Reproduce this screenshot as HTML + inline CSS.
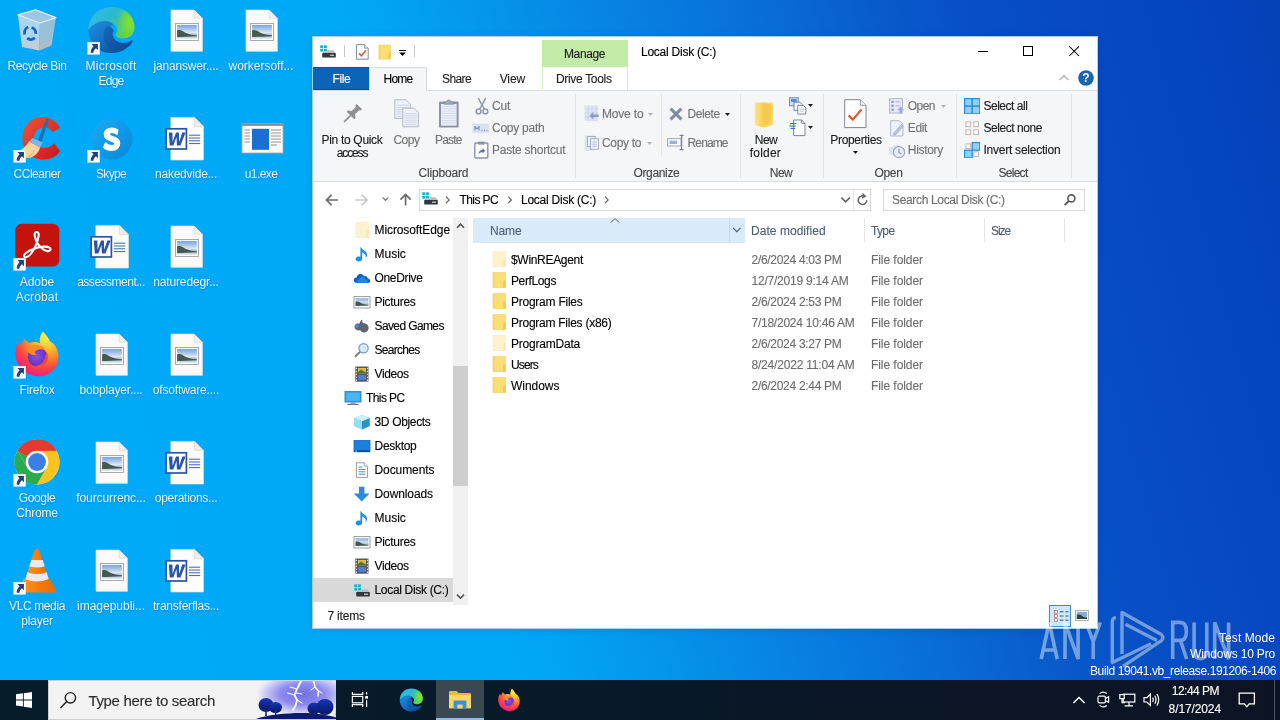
<!DOCTYPE html>
<html><head><meta charset="utf-8"><title>Local Disk (C:)</title>
<style>
html,body{margin:0;padding:0}
body{width:1280px;height:720px;overflow:hidden;position:relative;font-family:"Liberation Sans",sans-serif;background:#0a5fd0}
#root{position:absolute;left:0;top:0;width:1280px;height:720px;will-change:transform}
.r{position:absolute;display:block}
.t{position:absolute;white-space:nowrap;font-family:"Liberation Sans",sans-serif;-webkit-text-stroke:.12px currentColor}
</style></head><body><div id="root">
<div class="r" style="left:0;top:0;width:1280px;height:720px;background:linear-gradient(75deg,#00a9f9 0%,#00a8f8 36%,#029ff3 41%,#0497ee 45%,#068ce8 50%,#0880e2 55.6%,#0875dc 61%,#096ad5 66%,#095ccc 72%,#0750c6 78%,#074ac2 85%,#0545c0 93%,#0541b6 100%)"></div>
<svg class="r" style="left:13px;top:6px;overflow:visible;" width="48" height="50" viewBox="0 0 48 50"><defs><linearGradient id="rbl1" x1="0" y1="0" x2="0" y2="1"><stop offset="0" stop-color="#c3def0"/><stop offset=".7" stop-color="#cfdde8"/><stop offset="1" stop-color="#ecd2c4"/></linearGradient><linearGradient id="rbr1" x1="0" y1="0" x2="0" y2="1"><stop offset="0" stop-color="#a9c3d6"/><stop offset=".7" stop-color="#b5c3cf"/><stop offset="1" stop-color="#e2b9a8"/></linearGradient></defs><path d="M4.8 8.8 L26.9 17 L26.2 44.6 L9 41.1Z" fill="url(#rbl1)" opacity=".85"/><path d="M26.9 17 L42.9 11.600 L38.600 39.500 L26.200 44.600Z" fill="url(#rbr1)" opacity=".88"/><path d="M4.8 8.8 L22.7 3.8 L42.9 11.6 L26.9 17Z" fill="#9dc6e2" stroke="#e3f1fa" stroke-width="1.2" stroke-linejoin="round"/><g fill="none" stroke="#1763bd" stroke-width="2.900"><path d="M11.800 28.500 a5.400 5.800 0 0 1 3.400 -7.300"/><path d="M18.600 21.600 a5.400 5.800 0 0 1 4.200 6.200"/><path d="M21.800 31.800 a5.600 5.600 0 0 1 -7.600 .400"/></g></svg>
<div class="t" style="left:7.50px;top:58.00px;font-size:12px;line-height:16px;color:rgba(255,255,255,.92);letter-spacing:-0.396px;text-shadow:0 1px 2px rgba(0,35,90,.26),0 0 1px rgba(0,35,90,.12);-webkit-text-stroke:0;">Recycle Bin</div>
<svg class="r" style="left:87px;top:6px;overflow:visible;" width="48" height="50" viewBox="0 0 48 50"><defs><linearGradient id="eg12" x1="0" y1="0" x2="1" y2=".6"><stop offset="0" stop-color="#30bdf2"/><stop offset=".5" stop-color="#2bb9cf"/><stop offset="1" stop-color="#63d24c"/></linearGradient><linearGradient id="eg22" x1="0" y1="0" x2=".8" y2="1"><stop offset="0" stop-color="#1d8fdc"/><stop offset=".55" stop-color="#1670c4"/><stop offset="1" stop-color="#0c4b98"/></linearGradient><radialGradient id="eg32" cx=".8" cy=".5" r=".55"><stop offset="0" stop-color="#86e22c"/><stop offset=".6" stop-color="#6fd845" stop-opacity=".8"/><stop offset="1" stop-color="#6fd845" stop-opacity="0"/></radialGradient><linearGradient id="eg42" x1="0" y1="0" x2="1" y2="1"><stop offset="0" stop-color="#1668ba"/><stop offset="1" stop-color="#0f4790"/></linearGradient></defs><path d="M1.5 24 C1.5 10 12 1 25 1 C38 1 47.5 10 47.5 21 C47.5 28 42.5 32.5 36 32.5 C30 32.5 28.5 30 28.5 28.5 C28.5 27 30.2 26.6 30.2 24 C30.2 20.5 26.5 16.5 20.5 16.5 C11 16.500 3.500 23 1.500 24Z" fill="url(#eg12)"/><path d="M25 1 C38 1 47.5 10 47.5 21 C47.5 28 42.5 32.5 36 32.5 C31 32.5 29 31 28.6 29 L30 12Z" fill="url(#eg32)"/><path d="M1.5 24 C1.5 37 11 47 24 47 C30 47 35 45.5 39 42.5 C30 44 20 39 20 29 C20 23 23 19.500 26.500 18.500 C22 13 9 13.500 1.500 24Z" fill="url(#eg22)"/><path d="M19.500 21 C15.500 25 15.500 33 19 38.500 C23 44.500 31 46.500 38 43 C42 41 44.500 38 45.500 35.500 C46 34.400 45 34 44.200 34.600 C40 37.600 33 38 28.500 34 C25 31 25 27 27 25 C25.500 22 22.500 19.500 19.500 21Z" fill="url(#eg42)"/><g transform="translate(.6 36.2)"><rect x="0" y="0" width="12.1" height="12.1" fill="#fff" stroke="#d3e6f3" stroke-width=".5"/><path d="M3.8 1.7 H10.3 V8 L8.3 6 C6.8 7.2 5.8 8.9 5.6 10.9 L3 10.4 C3.1 7.6 4.3 5.4 6 4Z" fill="#1d3f86"/></g></svg>
<div class="t" style="left:85.50px;top:58.00px;font-size:12px;line-height:16px;color:rgba(255,255,255,.92);letter-spacing:0.258px;text-shadow:0 1px 2px rgba(0,35,90,.26),0 0 1px rgba(0,35,90,.12);-webkit-text-stroke:0;">Microsoft</div>
<div class="t" style="left:98.50px;top:73.00px;font-size:12px;line-height:16px;color:rgba(255,255,255,.92);letter-spacing:-0.756px;text-shadow:0 1px 2px rgba(0,35,90,.26),0 0 1px rgba(0,35,90,.12);-webkit-text-stroke:0;">Edge</div>
<svg class="r" style="left:162px;top:6px;overflow:visible;" width="48" height="50" viewBox="0 0 48 50"><path d="M9 4.1 H32.2 L40.4 12.3 V45.3 H9Z" fill="#fbfaf9" stroke="#e9e3dc" stroke-width=".7"/><path d="M32.2 4.1 V12.3 H40.4Z" fill="#f4efe9" stroke="#dcd3c9" stroke-width=".6"/><rect x="13.6" y="17.4" width="22.8" height="17" fill="#fff" stroke="#8b969e" stroke-width=".8"/><defs><linearGradient id="sky3" x1="0" y1="0" x2="0" y2="1"><stop offset="0" stop-color="#7aa3dc"/><stop offset=".3" stop-color="#a9c6ea"/><stop offset=".55" stop-color="#dce8f3"/><stop offset=".75" stop-color="#9db6c8"/><stop offset="1" stop-color="#e3ebf1"/></linearGradient></defs><rect x="15.1" y="18.9" width="19.800" height="14" fill="url(#sky3)"/><path d="M15.100 24.400 C17 23.600 19.500 24.200 22 26 C26 28.600 31 28.800 34.900 29.200 L34.900 30.200 C28 30.600 20 30.800 15.100 31Z" fill="#46594f"/></svg>
<div class="t" style="left:153.50px;top:58.00px;font-size:12px;line-height:16px;color:rgba(255,255,255,.92);letter-spacing:-0.182px;text-shadow:0 1px 2px rgba(0,35,90,.26),0 0 1px rgba(0,35,90,.12);-webkit-text-stroke:0;">jananswer....</div>
<svg class="r" style="left:237px;top:6px;overflow:visible;" width="48" height="50" viewBox="0 0 48 50"><path d="M9 4.1 H32.2 L40.4 12.3 V45.3 H9Z" fill="#fbfaf9" stroke="#e9e3dc" stroke-width=".7"/><path d="M32.2 4.1 V12.3 H40.4Z" fill="#f4efe9" stroke="#dcd3c9" stroke-width=".6"/><rect x="13.6" y="17.4" width="22.8" height="17" fill="#fff" stroke="#8b969e" stroke-width=".8"/><defs><linearGradient id="sky4" x1="0" y1="0" x2="0" y2="1"><stop offset="0" stop-color="#7aa3dc"/><stop offset=".3" stop-color="#a9c6ea"/><stop offset=".55" stop-color="#dce8f3"/><stop offset=".75" stop-color="#9db6c8"/><stop offset="1" stop-color="#e3ebf1"/></linearGradient></defs><rect x="15.1" y="18.9" width="19.800" height="14" fill="url(#sky4)"/><path d="M15.100 24.400 C17 23.600 19.500 24.200 22 26 C26 28.600 31 28.800 34.900 29.200 L34.900 30.200 C28 30.600 20 30.800 15.100 31Z" fill="#46594f"/></svg>
<div class="t" style="left:228.50px;top:58.00px;font-size:12px;line-height:16px;color:rgba(255,255,255,.92);letter-spacing:-0.010px;text-shadow:0 1px 2px rgba(0,35,90,.26),0 0 1px rgba(0,35,90,.12);-webkit-text-stroke:0;">workersoff...</div>
<svg class="r" style="left:13px;top:114px;overflow:visible;" width="48" height="50" viewBox="0 0 48 50"><defs><linearGradient id="ccg5" x1="0" y1="0" x2="1" y2="1"><stop offset="0" stop-color="#f0553a"/><stop offset="1" stop-color="#c8161a"/></linearGradient></defs><path d="M47 14 C43 5.5 35 2.5 28 3 C17 4 10 12 9.5 23 C9 36 18 45.5 30 45.5 C38 45.5 44 42 47 37 L41 29 C38.5 32.5 35 34 31 34 C25 34 21 29.5 21 24 C21 18 25.5 13.5 31 13.5 C35 13.5 37.5 15 39.5 18Z" fill="url(#ccg5)"/><path d="M33.5 4.5 L36 5.5 L27.5 31 L23.5 29.5Z" fill="#1d6fb8"/><path d="M19.5 24 L30 28.5 L27 33.5 L16 27.5Z" fill="#7ab7e3"/><path d="M16 27.5 L27 33.5 C26 38 22 43 15.5 44 C10 44.5 4 41 2 38.5 C8 37 13 32.5 16 27.5Z" fill="#f6d59a"/><path d="M21.5 36 C19.5 40 17 42.5 13.5 44" stroke="#e3b56a" stroke-width="1" fill="none"/><g transform="translate(.6 36.2)"><rect x="0" y="0" width="12.1" height="12.1" fill="#fff" stroke="#d3e6f3" stroke-width=".5"/><path d="M3.8 1.7 H10.3 V8 L8.3 6 C6.8 7.2 5.8 8.9 5.6 10.9 L3 10.4 C3.1 7.6 4.3 5.4 6 4Z" fill="#1d3f86"/></g></svg>
<div class="t" style="left:13.50px;top:166.00px;font-size:12px;line-height:16px;color:rgba(255,255,255,.92);letter-spacing:-0.461px;text-shadow:0 1px 2px rgba(0,35,90,.26),0 0 1px rgba(0,35,90,.12);-webkit-text-stroke:0;">CCleaner</div>
<svg class="r" style="left:87px;top:114px;overflow:visible;" width="48" height="50" viewBox="0 0 48 50"><defs><linearGradient id="skg6" x1="0" y1="0" x2="1" y2="1"><stop offset="0" stop-color="#1cabf3"/><stop offset=".5" stop-color="#0f9ae9"/><stop offset="1" stop-color="#0a86d6"/></linearGradient></defs><circle cx="25" cy="25" r="20.5" fill="url(#skg6)"/><g transform="translate(24.600 25.200) scale(1.06 1.16) translate(-24.400 -24.450)"><path d="M30.2 16.6 C28.6 15.4 26.6 14.9 24.6 14.9 C20.4 14.9 17.6 17.1 17.6 20.4 C17.6 23.6 20 24.9 23.6 25.8 C26.4 26.5 27.400 27 27.400 28.200 C27.400 29.400 26.200 30.100 24.500 30.100 C22.300 30.100 20.300 29.200 18.600 27.800 L16.800 31.600 C18.800 33.200 21.600 34 24.400 34 C28.900 34 32 31.700 32 28 C32 24.700 29.600 23.400 26 22.500 C23.200 21.800 22.200 21.300 22.200 20.200 C22.200 19.200 23.200 18.600 24.800 18.600 C26.400 18.600 28 19.200 29.500 20.200Z" fill="#fff" stroke="#fff" stroke-width="1.2"/></g><g transform="translate(.6 36.2)"><rect x="0" y="0" width="12.1" height="12.1" fill="#fff" stroke="#d3e6f3" stroke-width=".5"/><path d="M3.8 1.7 H10.3 V8 L8.3 6 C6.8 7.2 5.8 8.9 5.6 10.9 L3 10.4 C3.1 7.6 4.3 5.4 6 4Z" fill="#1d3f86"/></g></svg>
<div class="t" style="left:96.00px;top:166.00px;font-size:12px;line-height:16px;color:rgba(255,255,255,.92);letter-spacing:-0.670px;text-shadow:0 1px 2px rgba(0,35,90,.26),0 0 1px rgba(0,35,90,.12);-webkit-text-stroke:0;">Skype</div>
<svg class="r" style="left:162px;top:114px;overflow:visible;" width="48" height="50" viewBox="0 0 48 50"><path d="M8.8 3.4 H32.5 L41.5 12.4 V46 H8.8Z" fill="#fdfdfd" stroke="#e4ddd3" stroke-width=".7"/><path d="M32.5 3.4 V12.4 H41.5Z" fill="#f1ece4" stroke="#d6cfc5" stroke-width=".6"/><g stroke="#3f62a8" stroke-width="1"><path d="M27 21.2 H38.2"/><path d="M27 24 H38.2"/><path d="M27 26.8 H38.2"/><path d="M27 29.6 H38.2"/></g><rect x="4.1" y="14.8" width="20.3" height="20.2" fill="#fff" stroke="#2a55a5" stroke-width="1.7"/><path d="M6.8 18.6 H10.4 L10.6 28 L14 18.6 H16.9 L17.2 28 L20.3 18.6 H23.6 L18.4 31.4 H14.9 L14.5 23 L11.3 31.4 H7.8Z" fill="#2a55a5"/></svg>
<div class="t" style="left:155.00px;top:166.00px;font-size:12px;line-height:16px;color:rgba(255,255,255,.92);letter-spacing:-0.226px;text-shadow:0 1px 2px rgba(0,35,90,.26),0 0 1px rgba(0,35,90,.12);-webkit-text-stroke:0;">nakedvide...</div>
<svg class="r" style="left:237px;top:114px;overflow:visible;" width="48" height="50" viewBox="0 0 48 50"><rect x="5" y="9.5" width="41" height="29.5" fill="#fcfbfa" stroke="#a7a7a7" stroke-width=".8"/><rect x="5" y="9.5" width="41" height="2.4" fill="#8d8d8d"/><rect x="15" y="14.8" width="17" height="21" fill="#1a6fd0"/><g stroke="#8b8580" stroke-width=".9"><path d="M7.5 16 H12.8"/><path d="M7.5 19 H12.8"/><path d="M7.5 22 H12.8"/><path d="M7.5 25 H12.8"/><path d="M7.5 28 H12.8"/><path d="M34 16 H44"/><path d="M34 19 H44"/><path d="M34 22 H44"/><path d="M34 25 H44"/><path d="M34 28 H44"/><path d="M34 31 H40"/></g></svg>
<div class="t" style="left:244.75px;top:166.00px;font-size:12px;line-height:16px;color:rgba(255,255,255,.92);letter-spacing:-0.588px;text-shadow:0 1px 2px rgba(0,35,90,.26),0 0 1px rgba(0,35,90,.12);-webkit-text-stroke:0;">u1.exe</div>
<svg class="r" style="left:13px;top:222px;overflow:visible;" width="48" height="50" viewBox="0 0 48 50"><rect x="2.3" y="1.8" width="44" height="42.6" rx="6.5" fill="#c4130d"/><path d="M22.8 10.2 C24.6 9.4 26 11 25.7 13.6 C25.2 18 23.5 22.8 21 27.2 C18.6 31.4 15.6 34.6 13.2 35.2 C10.6 35.8 10.2 33.2 12.6 31.2 C16.6 27.8 24.6 24.8 31.4 24.6 C36 24.5 38.2 26.2 37.2 28 C36.2 29.8 33 29.4 30.2 27.4 C26 24.4 22.6 18.6 21.8 14 C21.4 11.8 21.8 10.6 22.8 10.2Z" fill="none" stroke="#fff" stroke-width="2.1" stroke-linejoin="round"/><g transform="translate(.6 36.2)"><rect x="0" y="0" width="12.1" height="12.1" fill="#fff" stroke="#d3e6f3" stroke-width=".5"/><path d="M3.8 1.7 H10.3 V8 L8.3 6 C6.8 7.2 5.8 8.9 5.6 10.9 L3 10.4 C3.1 7.6 4.3 5.4 6 4Z" fill="#1d3f86"/></g></svg>
<div class="t" style="left:19.75px;top:274.00px;font-size:12px;line-height:16px;color:rgba(255,255,255,.92);letter-spacing:-0.040px;text-shadow:0 1px 2px rgba(0,35,90,.26),0 0 1px rgba(0,35,90,.12);-webkit-text-stroke:0;">Adobe</div>
<div class="t" style="left:15.85px;top:289.00px;font-size:12px;line-height:16px;color:rgba(255,255,255,.92);letter-spacing:0.135px;text-shadow:0 1px 2px rgba(0,35,90,.26),0 0 1px rgba(0,35,90,.12);-webkit-text-stroke:0;">Acrobat</div>
<svg class="r" style="left:87px;top:222px;overflow:visible;" width="48" height="50" viewBox="0 0 48 50"><path d="M8.8 3.4 H32.5 L41.5 12.4 V46 H8.8Z" fill="#fdfdfd" stroke="#e4ddd3" stroke-width=".7"/><path d="M32.5 3.4 V12.4 H41.5Z" fill="#f1ece4" stroke="#d6cfc5" stroke-width=".6"/><g stroke="#3f62a8" stroke-width="1"><path d="M27 21.2 H38.2"/><path d="M27 24 H38.2"/><path d="M27 26.8 H38.2"/><path d="M27 29.6 H38.2"/></g><rect x="4.1" y="14.8" width="20.3" height="20.2" fill="#fff" stroke="#2a55a5" stroke-width="1.7"/><path d="M6.8 18.6 H10.4 L10.6 28 L14 18.6 H16.9 L17.2 28 L20.3 18.6 H23.6 L18.4 31.4 H14.9 L14.5 23 L11.3 31.4 H7.8Z" fill="#2a55a5"/></svg>
<div class="t" style="left:77.20px;top:274.00px;font-size:12px;line-height:16px;color:rgba(255,255,255,.92);letter-spacing:-0.494px;text-shadow:0 1px 2px rgba(0,35,90,.26),0 0 1px rgba(0,35,90,.12);-webkit-text-stroke:0;">assessment...</div>
<svg class="r" style="left:162px;top:222px;overflow:visible;" width="48" height="50" viewBox="0 0 48 50"><path d="M9 4.1 H32.2 L40.4 12.3 V45.3 H9Z" fill="#fbfaf9" stroke="#e9e3dc" stroke-width=".7"/><path d="M32.2 4.1 V12.3 H40.4Z" fill="#f4efe9" stroke="#dcd3c9" stroke-width=".6"/><rect x="13.6" y="17.4" width="22.8" height="17" fill="#fff" stroke="#8b969e" stroke-width=".8"/><defs><linearGradient id="sky11" x1="0" y1="0" x2="0" y2="1"><stop offset="0" stop-color="#7aa3dc"/><stop offset=".3" stop-color="#a9c6ea"/><stop offset=".55" stop-color="#dce8f3"/><stop offset=".75" stop-color="#9db6c8"/><stop offset="1" stop-color="#e3ebf1"/></linearGradient></defs><rect x="15.1" y="18.9" width="19.800" height="14" fill="url(#sky11)"/><path d="M15.100 24.400 C17 23.600 19.500 24.200 22 26 C26 28.600 31 28.800 34.900 29.200 L34.900 30.200 C28 30.600 20 30.800 15.100 31Z" fill="#46594f"/></svg>
<div class="t" style="left:153.20px;top:274.00px;font-size:12px;line-height:16px;color:rgba(255,255,255,.92);letter-spacing:-0.137px;text-shadow:0 1px 2px rgba(0,35,90,.26),0 0 1px rgba(0,35,90,.12);-webkit-text-stroke:0;">naturedegr...</div>
<svg class="r" style="left:13px;top:330px;overflow:visible;" width="48" height="50" viewBox="0 0 48 50"><defs><radialGradient id="ffg12" cx=".72" cy=".12" r="1"><stop offset="0" stop-color="#fff44f"/><stop offset=".28" stop-color="#ffbd2e"/><stop offset=".52" stop-color="#ff7a2a"/><stop offset=".72" stop-color="#ff3d4a"/><stop offset=".9" stop-color="#f0207a"/><stop offset="1" stop-color="#d81b90"/></radialGradient><radialGradient id="ffp12" cx=".45" cy=".45" r=".6"><stop offset="0" stop-color="#8a4ff0"/><stop offset="1" stop-color="#5b2bbd"/></radialGradient></defs><path d="M30 1.5 C33.5 5 36 9 37.5 12 C40 12.5 42.5 15.5 44 19 C46.5 25 46 33 41.5 38.5 C37 44.5 29.5 47 22.5 46 C12 44.5 3.5 36 2.5 26 C2 20 3.5 15 6 11.5 C6.5 13 7.5 14.5 8.5 15.5 C9 12.5 10.5 10 12 8.5 C13 10.5 14.5 12 16.5 13 C20 11.5 24.5 12 27 13.5 C26 9 27.5 4 30 1.5Z" fill="url(#ffg12)"/><circle cx="24.5" cy="27" r="9.8" fill="url(#ffp12)"/><path d="M14 19 C17 15.5 23 14 28 16 C31 17.2 33 19.5 33.5 21.5 C31 19 27 18.6 24 20 C21 21.4 21.5 24 24 24.5 C20 26 15 24 14 19Z" fill="#ff8a2a"/><path d="M33.5 21.5 C36.5 26 35.5 33 30.5 36.5 C25 40 17.5 38.5 14.5 34 C19 37 26 36.5 29.5 32.5 C32.5 29 32.5 24.5 33.5 21.5Z" fill="#ff4b3d" opacity=".85"/><g transform="translate(.6 36.2)"><rect x="0" y="0" width="12.1" height="12.1" fill="#fff" stroke="#d3e6f3" stroke-width=".5"/><path d="M3.8 1.7 H10.3 V8 L8.3 6 C6.8 7.2 5.8 8.9 5.6 10.9 L3 10.4 C3.1 7.6 4.3 5.4 6 4Z" fill="#1d3f86"/></g></svg>
<div class="t" style="left:19.50px;top:382.00px;font-size:12px;line-height:16px;color:rgba(255,255,255,.92);letter-spacing:-0.239px;text-shadow:0 1px 2px rgba(0,35,90,.26),0 0 1px rgba(0,35,90,.12);-webkit-text-stroke:0;">Firefox</div>
<svg class="r" style="left:87px;top:330px;overflow:visible;" width="48" height="50" viewBox="0 0 48 50"><path d="M9 4.1 H32.2 L40.4 12.3 V45.3 H9Z" fill="#fbfaf9" stroke="#e9e3dc" stroke-width=".7"/><path d="M32.2 4.1 V12.3 H40.4Z" fill="#f4efe9" stroke="#dcd3c9" stroke-width=".6"/><rect x="13.6" y="17.4" width="22.8" height="17" fill="#fff" stroke="#8b969e" stroke-width=".8"/><defs><linearGradient id="sky13" x1="0" y1="0" x2="0" y2="1"><stop offset="0" stop-color="#7aa3dc"/><stop offset=".3" stop-color="#a9c6ea"/><stop offset=".55" stop-color="#dce8f3"/><stop offset=".75" stop-color="#9db6c8"/><stop offset="1" stop-color="#e3ebf1"/></linearGradient></defs><rect x="15.1" y="18.9" width="19.800" height="14" fill="url(#sky13)"/><path d="M15.100 24.400 C17 23.600 19.500 24.200 22 26 C26 28.600 31 28.800 34.900 29.200 L34.900 30.200 C28 30.600 20 30.800 15.100 31Z" fill="#46594f"/></svg>
<div class="t" style="left:79.50px;top:382.00px;font-size:12px;line-height:16px;color:rgba(255,255,255,.92);letter-spacing:-0.183px;text-shadow:0 1px 2px rgba(0,35,90,.26),0 0 1px rgba(0,35,90,.12);-webkit-text-stroke:0;">bobplayer....</div>
<svg class="r" style="left:162px;top:330px;overflow:visible;" width="48" height="50" viewBox="0 0 48 50"><path d="M9 4.1 H32.2 L40.4 12.3 V45.3 H9Z" fill="#fbfaf9" stroke="#e9e3dc" stroke-width=".7"/><path d="M32.2 4.1 V12.3 H40.4Z" fill="#f4efe9" stroke="#dcd3c9" stroke-width=".6"/><rect x="13.6" y="17.4" width="22.8" height="17" fill="#fff" stroke="#8b969e" stroke-width=".8"/><defs><linearGradient id="sky14" x1="0" y1="0" x2="0" y2="1"><stop offset="0" stop-color="#7aa3dc"/><stop offset=".3" stop-color="#a9c6ea"/><stop offset=".55" stop-color="#dce8f3"/><stop offset=".75" stop-color="#9db6c8"/><stop offset="1" stop-color="#e3ebf1"/></linearGradient></defs><rect x="15.1" y="18.9" width="19.800" height="14" fill="url(#sky14)"/><path d="M15.100 24.400 C17 23.600 19.500 24.200 22 26 C26 28.600 31 28.800 34.900 29.200 L34.900 30.200 C28 30.600 20 30.800 15.100 31Z" fill="#46594f"/></svg>
<div class="t" style="left:152.80px;top:382.00px;font-size:12px;line-height:16px;color:rgba(255,255,255,.92);letter-spacing:-0.164px;text-shadow:0 1px 2px rgba(0,35,90,.26),0 0 1px rgba(0,35,90,.12);-webkit-text-stroke:0;">ofsoftware....</div>
<svg class="r" style="left:13px;top:438px;overflow:visible;" width="48" height="50" viewBox="0 0 48 50"><circle cx="24" cy="24" r="22.5" fill="#fff"/><path d="M24 24 L4.51 12.75 A22.5 22.5 0 0 1 43.49 12.75Z" fill="#e33b2e"/><path d="M24 1.5 A22.5 22.5 0 0 1 43.49 12.75 L24 12.75Z" fill="#e33b2e"/><path d="M43.49 12.75 A22.5 22.5 0 0 1 24 46.5 L33.74 29.6 L24 12.75Z" fill="#fcc31e"/><path d="M24 46.5 A22.5 22.5 0 0 1 4.51 12.75 L14.26 29.6 L33.74 29.6Z" fill="#2da94f"/><path d="M4.51 12.75 L14.26 29.6 L24 24Z" fill="#2da94f"/><path d="M24 12.75 H43.49 L33.74 29.6Z" fill="#fcc31e"/><path d="M4.51 12.75 A22.5 22.5 0 0 1 43.49 12.75 L24 12.75 L14.26 18.4Z" fill="#e33b2e"/><circle cx="24" cy="24" r="11.3" fill="#fff"/><circle cx="24" cy="24" r="8.9" fill="#3b7de9"/><g transform="translate(.6 36.2)"><rect x="0" y="0" width="12.1" height="12.1" fill="#fff" stroke="#d3e6f3" stroke-width=".5"/><path d="M3.8 1.7 H10.3 V8 L8.3 6 C6.8 7.2 5.8 8.9 5.6 10.9 L3 10.4 C3.1 7.6 4.3 5.4 6 4Z" fill="#1d3f86"/></g></svg>
<div class="t" style="left:18.70px;top:490.00px;font-size:12px;line-height:16px;color:rgba(255,255,255,.92);letter-spacing:-0.349px;text-shadow:0 1px 2px rgba(0,35,90,.26),0 0 1px rgba(0,35,90,.12);-webkit-text-stroke:0;">Google</div>
<div class="t" style="left:16.25px;top:505.00px;font-size:12px;line-height:16px;color:rgba(255,255,255,.92);letter-spacing:-0.197px;text-shadow:0 1px 2px rgba(0,35,90,.26),0 0 1px rgba(0,35,90,.12);-webkit-text-stroke:0;">Chrome</div>
<svg class="r" style="left:87px;top:438px;overflow:visible;" width="48" height="50" viewBox="0 0 48 50"><path d="M9 4.1 H32.2 L40.4 12.3 V45.3 H9Z" fill="#fbfaf9" stroke="#e9e3dc" stroke-width=".7"/><path d="M32.2 4.1 V12.3 H40.4Z" fill="#f4efe9" stroke="#dcd3c9" stroke-width=".6"/><rect x="13.6" y="17.4" width="22.8" height="17" fill="#fff" stroke="#8b969e" stroke-width=".8"/><defs><linearGradient id="sky16" x1="0" y1="0" x2="0" y2="1"><stop offset="0" stop-color="#7aa3dc"/><stop offset=".3" stop-color="#a9c6ea"/><stop offset=".55" stop-color="#dce8f3"/><stop offset=".75" stop-color="#9db6c8"/><stop offset="1" stop-color="#e3ebf1"/></linearGradient></defs><rect x="15.1" y="18.9" width="19.800" height="14" fill="url(#sky16)"/><path d="M15.100 24.400 C17 23.600 19.500 24.200 22 26 C26 28.600 31 28.800 34.900 29.200 L34.900 30.200 C28 30.600 20 30.800 15.100 31Z" fill="#46594f"/></svg>
<div class="t" style="left:76.25px;top:490.00px;font-size:12px;line-height:16px;color:rgba(255,255,255,.92);letter-spacing:-0.085px;text-shadow:0 1px 2px rgba(0,35,90,.26),0 0 1px rgba(0,35,90,.12);-webkit-text-stroke:0;">fourcurrenc...</div>
<svg class="r" style="left:162px;top:438px;overflow:visible;" width="48" height="50" viewBox="0 0 48 50"><path d="M8.8 3.4 H32.5 L41.5 12.4 V46 H8.8Z" fill="#fdfdfd" stroke="#e4ddd3" stroke-width=".7"/><path d="M32.5 3.4 V12.4 H41.5Z" fill="#f1ece4" stroke="#d6cfc5" stroke-width=".6"/><g stroke="#3f62a8" stroke-width="1"><path d="M27 21.2 H38.2"/><path d="M27 24 H38.2"/><path d="M27 26.8 H38.2"/><path d="M27 29.6 H38.2"/></g><rect x="4.1" y="14.8" width="20.3" height="20.2" fill="#fff" stroke="#2a55a5" stroke-width="1.7"/><path d="M6.8 18.6 H10.4 L10.6 28 L14 18.6 H16.9 L17.2 28 L20.3 18.6 H23.6 L18.4 31.4 H14.9 L14.5 23 L11.3 31.4 H7.8Z" fill="#2a55a5"/></svg>
<div class="t" style="left:154.75px;top:490.00px;font-size:12px;line-height:16px;color:rgba(255,255,255,.92);letter-spacing:-0.272px;text-shadow:0 1px 2px rgba(0,35,90,.26),0 0 1px rgba(0,35,90,.12);-webkit-text-stroke:0;">operations...</div>
<svg class="r" style="left:13px;top:546px;overflow:visible;" width="48" height="50" viewBox="0 0 48 50"><defs><linearGradient id="vlg18" x1="0" y1="0" x2="1" y2="0"><stop offset="0" stop-color="#f79a2e"/><stop offset=".5" stop-color="#f57e0f"/><stop offset="1" stop-color="#e96a06"/></linearGradient></defs><path d="M10.5 33 L37 33 L43.5 45 Q44 46.6 42 46.6 L5.5 46.6 Q3.6 46.6 4.3 45Z" fill="url(#vlg18)"/><path d="M21.5 4.5 Q24 1 26.3 4.5 L36.5 35.5 Q24 41.5 11.5 35.5Z" fill="url(#vlg18)"/><path d="M18.3 14 L29.7 14 L31.7 20.2 Q24 23 16.3 20.2Z" fill="#ebe9ee"/><path d="M14.4 26.2 Q24 30 33.6 26.2 L35.7 33 Q24 38 12.3 33Z" fill="#ebe9ee"/><g transform="translate(.6 36.2)"><rect x="0" y="0" width="12.1" height="12.1" fill="#fff" stroke="#d3e6f3" stroke-width=".5"/><path d="M3.8 1.7 H10.3 V8 L8.3 6 C6.8 7.2 5.8 8.9 5.6 10.9 L3 10.4 C3.1 7.6 4.3 5.4 6 4Z" fill="#1d3f86"/></g></svg>
<div class="t" style="left:9.00px;top:598.00px;font-size:12px;line-height:16px;color:rgba(255,255,255,.92);letter-spacing:-0.373px;text-shadow:0 1px 2px rgba(0,35,90,.26),0 0 1px rgba(0,35,90,.12);-webkit-text-stroke:0;">VLC media</div>
<div class="t" style="left:21.25px;top:613.00px;font-size:12px;line-height:16px;color:rgba(255,255,255,.92);letter-spacing:-0.197px;text-shadow:0 1px 2px rgba(0,35,90,.26),0 0 1px rgba(0,35,90,.12);-webkit-text-stroke:0;">player</div>
<svg class="r" style="left:87px;top:546px;overflow:visible;" width="48" height="50" viewBox="0 0 48 50"><path d="M9 4.1 H32.2 L40.4 12.3 V45.3 H9Z" fill="#fbfaf9" stroke="#e9e3dc" stroke-width=".7"/><path d="M32.2 4.1 V12.3 H40.4Z" fill="#f4efe9" stroke="#dcd3c9" stroke-width=".6"/><rect x="13.6" y="17.4" width="22.8" height="17" fill="#fff" stroke="#8b969e" stroke-width=".8"/><defs><linearGradient id="sky19" x1="0" y1="0" x2="0" y2="1"><stop offset="0" stop-color="#7aa3dc"/><stop offset=".3" stop-color="#a9c6ea"/><stop offset=".55" stop-color="#dce8f3"/><stop offset=".75" stop-color="#9db6c8"/><stop offset="1" stop-color="#e3ebf1"/></linearGradient></defs><rect x="15.1" y="18.9" width="19.800" height="14" fill="url(#sky19)"/><path d="M15.100 24.400 C17 23.600 19.500 24.200 22 26 C26 28.600 31 28.800 34.900 29.200 L34.900 30.200 C28 30.600 20 30.800 15.100 31Z" fill="#46594f"/></svg>
<div class="t" style="left:77.00px;top:598.00px;font-size:12px;line-height:16px;color:rgba(255,255,255,.92);letter-spacing:-0.003px;text-shadow:0 1px 2px rgba(0,35,90,.26),0 0 1px rgba(0,35,90,.12);-webkit-text-stroke:0;">imagepubli...</div>
<svg class="r" style="left:162px;top:546px;overflow:visible;" width="48" height="50" viewBox="0 0 48 50"><path d="M8.8 3.4 H32.5 L41.5 12.4 V46 H8.8Z" fill="#fdfdfd" stroke="#e4ddd3" stroke-width=".7"/><path d="M32.5 3.4 V12.4 H41.5Z" fill="#f1ece4" stroke="#d6cfc5" stroke-width=".6"/><g stroke="#3f62a8" stroke-width="1"><path d="M27 21.2 H38.2"/><path d="M27 24 H38.2"/><path d="M27 26.8 H38.2"/><path d="M27 29.6 H38.2"/></g><rect x="4.1" y="14.8" width="20.3" height="20.2" fill="#fff" stroke="#2a55a5" stroke-width="1.7"/><path d="M6.8 18.6 H10.4 L10.6 28 L14 18.6 H16.9 L17.2 28 L20.3 18.6 H23.6 L18.4 31.4 H14.9 L14.5 23 L11.3 31.4 H7.8Z" fill="#2a55a5"/></svg>
<div class="t" style="left:153.00px;top:598.00px;font-size:12px;line-height:16px;color:rgba(255,255,255,.92);letter-spacing:-0.224px;text-shadow:0 1px 2px rgba(0,35,90,.26),0 0 1px rgba(0,35,90,.12);-webkit-text-stroke:0;">transferflas...</div>
<div class="r" style="left:312px;top:36px;width:786px;height:593px;background:#fff;box-shadow:0 0 0 1px rgba(60,150,220,.45) inset,0 1px 7px rgba(0,0,0,.12)"></div>
<svg class="r" style="left:320px;top:45px;" width="16" height="13" viewBox="0 0 16 13"><g fill="#1fb3c9"><rect x="0.2" y="0.3" width="3" height="2.8"/><rect x="3.9" y="0.3" width="3" height="2.8"/><rect x="0.2" y="3.8" width="3" height="2.8"/><rect x="3.9" y="3.8" width="3" height="2.8"/></g><path d="M7.4 5.2 H13.4 L15.6 8 H2.4 L4 6.6 H7.4Z" fill="#b9bcc0"/><rect x="2.2" y="8" width="13.6" height="4.4" rx=".6" fill="#33363a"/><rect x="10" y="9.6" width="4" height="1.2" fill="#d8dadc"/></svg>
<div class="r" style="left:344px;top:45px;width:1px;height:12px;background:#c8c8c8;"></div>
<svg class="r" style="left:356px;top:44px;" width="13" height="16" viewBox="0 0 13 16"><path d="M.6 .6 H8.6 L12.2 4.2 V15.2 H.6Z" fill="#fff" stroke="#7b8794" stroke-width="1"/><path d="M8.6 .6 V4.2 H12.2" fill="#e9edf1" stroke="#7b8794" stroke-width=".8"/><path d="M3 9.4 L5.4 11.8 L10 6.2" fill="none" stroke="#d9603d" stroke-width="1.6"/></svg>
<svg class="r" style="left:378px;top:44px;" width="13" height="16" viewBox="0 0 14 16"><rect x="1" y=".5" width="12.6" height="15.2" rx=".5" fill="#fbde74" stroke="#f0cf5c" stroke-width=".6"/><rect x="1" y=".5" width="1.6" height="15.2" fill="#f5d465"/><path d="M11.2 9.4 L13.6 7.4 V15.7 H11.2Z" fill="#efc94e"/></svg>
<svg class="r" style="left:398px;top:48px;" width="10" height="9" viewBox="0 0 10 9"><path d="M1 2.5 H8" stroke="#000" stroke-width="1"/><path d="M1.2 4.6 H7.8 L4.5 8Z" fill="#000"/></svg>
<div class="r" style="left:414px;top:45px;width:1px;height:12px;background:#c8c8c8;"></div>
<div class="r" style="left:542px;top:40px;width:86px;height:27px;background:#c3eaa6;"></div>
<div class="r" style="left:542px;top:67px;width:86px;height:24px;background:#fff;border-left:1px solid #d5efc3;border-right:1px solid #d5efc3;box-sizing:border-box"></div>
<div class="t" style="left:564.00px;top:46.00px;font-size:12px;line-height:16px;color:#1e1e1e;letter-spacing:-0.394px;">Manage</div>
<div class="t" style="left:641.00px;top:43.50px;font-size:12px;line-height:16px;color:#000;letter-spacing:-0.245px;">Local Disk (C:)</div>
<svg class="r" style="left:959px;top:37px;" width="138" height="30" viewBox="0 0 138 30"><path d="M19 14.5 H29" stroke="#000" stroke-width="1"/><rect x="64.5" y="9.5" width="9" height="9" fill="none" stroke="#000" stroke-width="1"/><path d="M110.3 9.3 L120 19 M120 9.3 L110.3 19" stroke="#000" stroke-width="1.05"/></svg>
<div class="r" style="left:313px;top:67px;width:56px;height:23px;background:#0b64b5;box-shadow:0 1px 0 #0a548f inset,0 -1px 0 #0a548f inset"></div>
<div class="t" style="left:332.60px;top:71.00px;font-size:12px;line-height:16px;color:#fff;letter-spacing:-0.434px;">File</div>
<div class="r" style="left:369px;top:67px;width:58px;height:24px;background:#f5f6f7;border:1px solid #dadbdc;border-bottom:none;box-sizing:border-box"></div>
<div class="t" style="left:383.50px;top:71.00px;font-size:12px;line-height:16px;color:#000;letter-spacing:-0.752px;">Home</div>
<div class="t" style="left:442.00px;top:71.00px;font-size:12px;line-height:16px;color:#1e1e1e;letter-spacing:-0.604px;">Share</div>
<div class="t" style="left:499.70px;top:71.00px;font-size:12px;line-height:16px;color:#1e1e1e;letter-spacing:-0.123px;">View</div>
<div class="t" style="left:556.00px;top:71.00px;font-size:12px;line-height:16px;color:#1e1e1e;letter-spacing:-0.321px;">Drive Tools</div>
<svg class="r" style="left:1056px;top:70px;" width="40" height="18" viewBox="0 0 40 18"><path d="M3.5 10 L8 5.6 L12.5 10" fill="none" stroke="#b9b9b9" stroke-width="1.5"/><circle cx="30" cy="8" r="7.8" fill="#1565b0"/><text x="30" y="12.3" text-anchor="middle" font-family="Liberation Sans" font-weight="bold" font-size="12" fill="#fff">?</text></svg>
<div class="r" style="left:313px;top:90px;width:784px;height:92px;background:#f5f6f7;border-top:1px solid #dadbdc;border-bottom:1px solid #dadbdc;box-sizing:border-box"></div>
<div class="r" style="left:370px;top:90px;width:56px;height:1px;background:#f5f6f7;"></div>
<div class="r" style="left:575px;top:94px;width:1px;height:84px;background:#e2e3e4;"></div>
<div class="r" style="left:740px;top:94px;width:1px;height:84px;background:#e2e3e4;"></div>
<div class="r" style="left:823px;top:94px;width:1px;height:84px;background:#e2e3e4;"></div>
<div class="r" style="left:956px;top:94px;width:1px;height:84px;background:#e2e3e4;"></div>
<div class="r" style="left:1071px;top:94px;width:1px;height:84px;background:#e2e3e4;"></div>
<div class="r" style="left:661px;top:94px;width:1px;height:62px;background:#e4e5e6;"></div>
<div class="t" style="left:321.50px;top:132.00px;font-size:12px;line-height:16px;color:#1a1a1a;letter-spacing:-0.308px;">Pin to Quick</div>
<div class="t" style="left:336.75px;top:145.40px;font-size:12px;line-height:16px;color:#1a1a1a;letter-spacing:-1.141px;">access</div>
<div class="t" style="left:393.40px;top:132.00px;font-size:12px;line-height:16px;color:#727272;letter-spacing:-0.503px;">Copy</div>
<div class="t" style="left:435.00px;top:132.00px;font-size:12px;line-height:16px;color:#727272;letter-spacing:-0.817px;">Paste</div>
<div class="t" style="left:492.00px;top:98.00px;font-size:12px;line-height:16px;color:#727272;letter-spacing:-0.225px;">Cut</div>
<div class="t" style="left:492.00px;top:120.40px;font-size:12px;line-height:16px;color:#727272;letter-spacing:-0.256px;">Copy path</div>
<div class="t" style="left:492.00px;top:142.00px;font-size:12px;line-height:16px;color:#727272;letter-spacing:-0.243px;">Paste shortcut</div>
<div class="t" style="left:418.40px;top:165.00px;font-size:12px;line-height:16px;color:#444;letter-spacing:-0.151px;">Clipboard</div>
<div class="t" style="left:602.00px;top:106.00px;font-size:12px;line-height:16px;color:#727272;letter-spacing:-0.184px;">Move to</div>
<div class="t" style="left:602.00px;top:135.00px;font-size:12px;line-height:16px;color:#727272;letter-spacing:-0.336px;">Copy to</div>
<div class="t" style="left:633.40px;top:165.00px;font-size:12px;line-height:16px;color:#444;letter-spacing:-0.336px;">Organize</div>
<div class="t" style="left:687.60px;top:106.00px;font-size:12px;line-height:16px;color:#727272;letter-spacing:-0.415px;">Delete</div>
<div class="t" style="left:687.60px;top:135.00px;font-size:12px;line-height:16px;color:#727272;letter-spacing:-0.893px;">Rename</div>
<div class="t" style="left:754.85px;top:132.30px;font-size:12px;line-height:16px;color:#1a1a1a;letter-spacing:-0.569px;">New</div>
<div class="t" style="left:749.75px;top:145.00px;font-size:12px;line-height:16px;color:#1a1a1a;letter-spacing:0.214px;">folder</div>
<div class="t" style="left:769.85px;top:165.00px;font-size:12px;line-height:16px;color:#444;letter-spacing:-0.569px;">New</div>
<div class="t" style="left:830.30px;top:132.30px;font-size:12px;line-height:16px;color:#1a1a1a;letter-spacing:-0.329px;">Properties</div>
<div class="t" style="left:907.80px;top:98.00px;font-size:12px;line-height:16px;color:#727272;letter-spacing:-0.539px;">Open</div>
<div class="t" style="left:907.80px;top:120.40px;font-size:12px;line-height:16px;color:#727272;letter-spacing:-0.369px;">Edit</div>
<div class="t" style="left:907.80px;top:142.00px;font-size:12px;line-height:16px;color:#727272;letter-spacing:-0.305px;">History</div>
<div class="t" style="left:874.50px;top:165.00px;font-size:12px;line-height:16px;color:#444;letter-spacing:-0.339px;">Open</div>
<div class="t" style="left:983.40px;top:98.00px;font-size:12px;line-height:16px;color:#1a1a1a;letter-spacing:-0.459px;">Select all</div>
<div class="t" style="left:983.40px;top:120.40px;font-size:12px;line-height:16px;color:#1a1a1a;letter-spacing:-0.435px;">Select none</div>
<div class="t" style="left:983.40px;top:142.00px;font-size:12px;line-height:16px;color:#1a1a1a;letter-spacing:-0.232px;">Invert selection</div>
<div class="t" style="left:998.50px;top:165.00px;font-size:12px;line-height:16px;color:#444;letter-spacing:-0.725px;">Select</div>
<svg class="r" style="left:340px;top:102px;" width="24" height="24" viewBox="0 0 24 24"><g transform="rotate(45 12 12)"><path d="M8.2 1.6 H15.8 V3.4 L14.4 4.4 V10 L17.4 12.6 V14.2 H6.6 V12.6 L9.6 10 V4.4 L8.2 3.4Z" fill="#8e9094"/><path d="M12 14.2 V23.2" stroke="#8e9094" stroke-width="1.7"/></g></svg>
<svg class="r" style="left:393px;top:99px;" width="28" height="30" viewBox="0 0 28 30"><path d="M1.8 0.8 H12.999999999999998 L17.4 5.2 V19.400000000000002 H1.8Z" fill="#eef2fb" stroke="#a9b3c6" stroke-width=".9"/><path d="M3.4000000000000004 6.2 H15.799999999999999" stroke="#c0c9dc" stroke-width=".7"/><path d="M3.4000000000000004 8.4 H15.799999999999999" stroke="#c0c9dc" stroke-width=".7"/><path d="M3.4000000000000004 10.600000000000001 H15.799999999999999" stroke="#c0c9dc" stroke-width=".7"/><path d="M3.4000000000000004 12.8 H15.799999999999999" stroke="#c0c9dc" stroke-width=".7"/><path d="M3.4000000000000004 15.0 H15.799999999999999" stroke="#c0c9dc" stroke-width=".7"/><path d="M3.4000000000000004 17.2 H15.799999999999999" stroke="#c0c9dc" stroke-width=".7"/><path d="M9.8 9.2 H21.0 L25.4 13.6 V27.8 H9.8Z" fill="#eef2fb" stroke="#a9b3c6" stroke-width=".9"/><path d="M11.4 14.6 H23.799999999999997" stroke="#c0c9dc" stroke-width=".7"/><path d="M11.4 16.8 H23.799999999999997" stroke="#c0c9dc" stroke-width=".7"/><path d="M11.4 19.0 H23.799999999999997" stroke="#c0c9dc" stroke-width=".7"/><path d="M11.4 21.2 H23.799999999999997" stroke="#c0c9dc" stroke-width=".7"/><path d="M11.4 23.4 H23.799999999999997" stroke="#c0c9dc" stroke-width=".7"/><path d="M11.4 25.6 H23.799999999999997" stroke="#c0c9dc" stroke-width=".7"/></svg>
<svg class="r" style="left:438px;top:98px;" width="22" height="31" viewBox="0 0 22 31"><rect x="1" y="3.4" width="19.6" height="26.2" rx="1.2" fill="#8c93a6"/><rect x="3" y="6" width="15.6" height="21.6" fill="#edf1fb"/><path d="M3.6 8.2 H18" stroke="#c5cee0" stroke-width=".7"/><path d="M3.6 10.6 H18" stroke="#c5cee0" stroke-width=".7"/><path d="M3.6 13.0 H18" stroke="#c5cee0" stroke-width=".7"/><path d="M3.6 15.399999999999999 H18" stroke="#c5cee0" stroke-width=".7"/><path d="M3.6 17.799999999999997 H18" stroke="#c5cee0" stroke-width=".7"/><path d="M3.6 20.2 H18" stroke="#c5cee0" stroke-width=".7"/><path d="M3.6 22.599999999999998 H18" stroke="#c5cee0" stroke-width=".7"/><path d="M3.6 25.0 H18" stroke="#c5cee0" stroke-width=".7"/><path d="M6 6.2 V4 H8.6 C8.6 1.4 13 1.4 13 4 H15.6 V6.2Z" fill="#a3a9b8" stroke="#7b8296" stroke-width=".7"/></svg>
<svg class="r" style="left:475px;top:97px;" width="14" height="18" viewBox="0 0 14 18"><g fill="none" stroke="#8f98ad" stroke-width="1.5"><path d="M3.2 1 L9.6 12.6"/><path d="M10.8 1 L4.4 12.6"/><circle cx="3.6" cy="14.4" r="2.4"/><circle cx="10.4" cy="14.4" r="2.4"/></g></svg>
<svg class="r" style="left:472px;top:123px;" width="18" height="11" viewBox="0 0 18 11"><rect x=".5" y=".8" width="16.6" height="9" fill="#d9def3"/><path d="M3 7.4 V3.4 L5 6 L7 3.4 V7.4 M9.4 7.4 H10.4 M12 7.4 H13 M14.6 7.4 H15.4" fill="none" stroke="#5a6fb3" stroke-width=".9"/></svg>
<svg class="r" style="left:474px;top:141px;" width="15" height="18" viewBox="0 0 15 18"><rect x=".8" y="2" width="13" height="15" rx="1" fill="#fff" stroke="#8a92a6" stroke-width="1.4"/><rect x="4.2" y=".6" width="6.2" height="3" fill="#8a92a6"/><path d="M4.6 13.6 C4.6 10.2 6.4 8.8 8.4 8.8 V7 L11.4 9.8 L8.4 12.6 V10.9 C6.8 10.9 5.6 11.8 4.6 13.6Z" fill="#5d78b6"/></svg>
<svg class="r" style="left:584px;top:105px;" width="15" height="17" viewBox="0 0 15 17"><rect x=".4" y=".4" width="13.8" height="15.6" fill="#dfe4f4"/><g stroke="#c7cfe6" stroke-width=".6"><path d="M.4 4 H14.2 M.4 8 H14.2 M.4 12 H14.2 M4 .4 V16 M8 .4 V16 M12 .4 V16"/></g><path d="M14.6 9.6 H9.4 V7 L5.4 10.8 L9.4 14.4 V12 H14.6Z" fill="#8b9bc4"/></svg>
<svg class="r" style="left:584px;top:135px;" width="16" height="17" viewBox="0 0 16 17"><rect x=".4" y=".4" width="9.4" height="15.6" fill="#dfe4f4"/><rect x="3.4" y="1.6" width="8" height="10" fill="#eef1fa" stroke="#9aa5c0" stroke-width=".9"/><rect x="6.6" y="3.8" width="8" height="10.4" fill="#f4f6fc" stroke="#9aa5c0" stroke-width=".9"/><path d="M8.4 7 H12.8 M8.4 9.2 H12.8 M8.4 11.4 H12.8" stroke="#9aa5c0" stroke-width=".8"/></svg>
<svg class="r" style="left:648px;top:112.5px;" width="5" height="3" viewBox="0 0 5 3"><path d="M0 0 H5 L2.5 3Z" fill="#b3b3b3"/></svg>
<svg class="r" style="left:647px;top:141.5px;" width="5" height="3" viewBox="0 0 5 3"><path d="M0 0 H5 L2.5 3Z" fill="#b3b3b3"/></svg>
<svg class="r" style="left:669px;top:107px;" width="14" height="14" viewBox="0 0 14 14"><path d="M1.6 1.6 L12.4 12.4 M12.4 1.6 L1.6 12.4" stroke="#7d8ba6" stroke-width="3"/></svg>
<svg class="r" style="left:725px;top:112.5px;" width="5" height="3" viewBox="0 0 5 3"><path d="M0 0 H5 L2.5 3Z" fill="#1a1a1a"/></svg>
<svg class="r" style="left:667px;top:134px;" width="18" height="17" viewBox="0 0 18 17"><rect x=".6" y="4.6" width="13.4" height="7.4" fill="#fff" stroke="#9aa5c0" stroke-width="1"/><rect x="2.4" y="6.6" width="7.6" height="3.4" fill="#9fb0d8"/><path d="M12.6 1.4 H16.6 M14.6 1.4 V15.6 M12.6 15.6 H16.6" stroke="#7a8296" stroke-width="1.2" fill="none"/></svg>
<svg class="r" style="left:754px;top:101px;" width="21" height="27" viewBox="0 0 21 27"><defs><linearGradient id="nfg" x1="0" y1="0" x2="1" y2="0"><stop offset="0" stop-color="#fce28a"/><stop offset=".45" stop-color="#f8cf52"/><stop offset="1" stop-color="#fbdc78"/></linearGradient></defs><path d="M2 1.4 H17.6 Q19 1.4 19 2.8 V23 Q19 24.4 17.6 24.4 L10 26.4 L2 24.4 Q.8 24.2 .8 23 V2.8 Q.8 1.4 2 1.4Z" fill="url(#nfg)"/><path d="M8.4 3 H17 V19 L12.6 24.6 L8.4 19Z" fill="#f4c646" opacity=".7"/></svg>
<svg class="r" style="left:789px;top:97px;" width="18" height="18" viewBox="0 0 18 18"><rect x=".6" y=".8" width="8.6" height="8" fill="#cfe0f5" stroke="#5f7fae" stroke-width=".9"/><rect x="2" y="2.2" width="5.6" height="2.6" fill="#4c7fd0"/><path d="M5 5.2 H11 L13.4 7.6 V13.4 H5Z" fill="#f4f6fb" stroke="#6e7b90" stroke-width=".9"/><path d="M8.8 8.4 H14.4 L16.8 10.8 V17 H8.8Z" fill="#fff" stroke="#6e7b90" stroke-width=".9"/><path d="M10.4 12 H15.2 M10.4 14 H15.2" stroke="#9aa5b8" stroke-width=".7"/></svg>
<svg class="r" style="left:808px;top:103.5px;" width="5" height="3" viewBox="0 0 5 3"><path d="M0 0 H5 L2.5 3Z" fill="#1a1a1a"/></svg>
<svg class="r" style="left:789px;top:119px;" width="18" height="18" viewBox="0 0 18 18"><path d="M4.6 1 H12.6 L16 4.4 V16.6 H4.6Z" fill="#fff" stroke="#6e7b90" stroke-width=".9"/><path d="M12.6 1 V4.4 H16" fill="none" stroke="#6e7b90" stroke-width=".8"/><path d="M1 4.6 H7.4 M.4 7 H6.6 M1.4 9.4 H6.2" stroke="#2b63c0" stroke-width="1"/></svg>
<svg class="r" style="left:808px;top:126px;" width="5" height="3" viewBox="0 0 5 3"><path d="M0 0 H5 L2.5 3Z" fill="#1a1a1a"/></svg>
<svg class="r" style="left:844px;top:99px;" width="23" height="30" viewBox="0 0 23 30"><path d="M.7 .7 H16.4 L22 6.3 V28.6 H.7Z" fill="#fff" stroke="#7e858f" stroke-width="1"/><path d="M16.4 .7 V6.3 H22" fill="#eef0f3" stroke="#7e858f" stroke-width=".8"/><path d="M4.6 16.4 L8.8 20.6 L17.6 10.4" fill="none" stroke="#e2582b" stroke-width="2.2"/></svg>
<svg class="r" style="left:853px;top:151px;" width="5" height="3" viewBox="0 0 5 3"><path d="M0 0 H5 L2.5 3Z" fill="#1a1a1a"/></svg>
<svg class="r" style="left:889px;top:98px;" width="16" height="16" viewBox="0 0 16 16"><rect x=".6" y=".6" width="12.8" height="14.4" fill="#e6ebf7" stroke="#aab3c8" stroke-width=".9"/><g fill="#8fa0c6"><rect x="2.4" y="2.6" width="2.4" height="2.4"/><rect x="2.4" y="6.6" width="2.4" height="2.4"/><rect x="2.4" y="10.6" width="2.4" height="2.4"/></g><path d="M6.4 3.8 H11.4 M6.4 7.8 H11.4" stroke="#aab3c8" stroke-width=".9"/><path d="M11.6 8.4 L15.2 12.2 H13 V15.4 H10.2 V12.2 H8Z" fill="#9fb0d8"/></svg>
<svg class="r" style="left:940.5px;top:104.5px;" width="5" height="3" viewBox="0 0 5 3"><path d="M0 0 H5 L2.5 3Z" fill="#b3b3b3"/></svg>
<svg class="r" style="left:890px;top:120px;" width="15" height="17" viewBox="0 0 15 17"><path d="M.7 .7 H9.4 L13 4.3 V16 H.7Z" fill="#eef1f9" stroke="#aab3c8" stroke-width=".9"/><path d="M4 12.8 L11.4 4.4 L13.4 6.2 L6 14.4 L3.4 15.2Z" fill="#b8c4e2" stroke="#94a2c6" stroke-width=".6"/></svg>
<svg class="r" style="left:888px;top:142px;" width="18" height="17" viewBox="0 0 18 17"><path d="M.8 5 H5 L6.6 3 H11 V13 H.8Z" fill="#dde2f2"/><circle cx="11" cy="10.2" r="5.6" fill="#e9edf8" stroke="#9aa8cc" stroke-width="1.2"/><path d="M11 6.8 V10.4 L13.4 12" fill="none" stroke="#7f90bd" stroke-width="1.1"/></svg>
<svg class="r" style="left:964px;top:98px;" width="16" height="16" viewBox="0 0 16 16"><rect x="0.6" y="0.6" width="7.6" height="7.6" fill="#8fd0f8" stroke="#2c8ad2" stroke-width="1.2"/><rect x="8.2" y="0.6" width="7.6" height="7.6" fill="#8fd0f8" stroke="#2c8ad2" stroke-width="1.2"/><rect x="0.6" y="8.2" width="7.6" height="7.6" fill="#8fd0f8" stroke="#2c8ad2" stroke-width="1.2"/><rect x="8.2" y="8.2" width="7.6" height="7.6" fill="#8fd0f8" stroke="#2c8ad2" stroke-width="1.2"/></svg>
<svg class="r" style="left:964px;top:120px;" width="16" height="16" viewBox="0 0 16 16"><rect x="1.9" y="1.9" width="4.8" height="4.8" fill="#fff" stroke="#bfaea3" stroke-width=".9"/><rect x="9.8" y="1.9" width="4.8" height="4.8" fill="#fff" stroke="#bfaea3" stroke-width=".9"/><rect x="1.9" y="9.8" width="4.8" height="4.8" fill="#fff" stroke="#bfaea3" stroke-width=".9"/><rect x="9.8" y="9.8" width="4.8" height="4.8" fill="#fff" stroke="#bfaea3" stroke-width=".9"/></svg>
<svg class="r" style="left:964px;top:142px;" width="16" height="16" viewBox="0 0 16 16"><rect x="1.9" y="1.9" width="4.8" height="4.8" fill="#fff" stroke="#bfaea3" stroke-width=".9"/><rect x="8.2" y="0.6" width="7.6" height="7.6" fill="#8fd0f8" stroke="#2c8ad2" stroke-width="1.2"/><rect x="0.6" y="8.2" width="7.6" height="7.6" fill="#8fd0f8" stroke="#2c8ad2" stroke-width="1.2"/><rect x="9.8" y="9.8" width="4.8" height="4.8" fill="#fff" stroke="#bfaea3" stroke-width=".9"/></svg>
<div class="r" style="left:313px;top:182px;width:784px;height:36px;background:#fff;"></div>
<svg class="r" style="left:322px;top:190px;" width="96" height="20" viewBox="0 0 96 20"><g fill="none" stroke-width="1.7"><path d="M16 10 H4.6 M9.6 4.8 L4.4 10 L9.6 15.2" stroke="#6a6a6a"/><path d="M33.4 10 H44.8 M39.8 4.8 L45 10 L39.8 15.2" stroke="#c9c9c9"/><path d="M60.6 7.4 L63.5 10.3 L66.4 7.4" stroke="#7a7a7a" stroke-width="1.3"/><path d="M83.6 15.6 V4.6 M78.4 9.6 L83.6 4.4 L88.8 9.6" stroke="#6a6a6a"/></g></svg>
<div class="r" style="left:419px;top:189px;width:452px;height:22px;background:#fff;border:1px solid #d9d9d9;box-sizing:border-box"></div>
<div class="r" style="left:853px;top:190px;width:1px;height:20px;background:#e5e5e5;"></div>
<svg class="r" style="left:422px;top:192px;" width="16" height="13" viewBox="0 0 16 13"><g fill="#1fb3c9"><rect x="0.2" y="0.3" width="3" height="2.8"/><rect x="3.9" y="0.3" width="3" height="2.8"/><rect x="0.2" y="3.8" width="3" height="2.8"/><rect x="3.9" y="3.8" width="3" height="2.8"/></g><path d="M7.4 5.2 H13.4 L15.6 8 H2.4 L4 6.6 H7.4Z" fill="#b9bcc0"/><rect x="2.2" y="8" width="13.6" height="4.4" rx=".6" fill="#33363a"/><rect x="10" y="9.6" width="4" height="1.2" fill="#d8dadc"/></svg>
<div class="t" style="left:459.50px;top:191.70px;font-size:12px;line-height:16px;color:#000;letter-spacing:-0.596px;">This PC</div>
<div class="t" style="left:521.00px;top:191.70px;font-size:12px;line-height:16px;color:#000;letter-spacing:-0.245px;">Local Disk (C:)</div>
<svg class="r" style="left:443px;top:194px;" width="170" height="12" viewBox="0 0 170 12"><g fill="none" stroke="#5a5a5a" stroke-width="1.1"><path d="M3 2.6 L6.2 5.9 L3 9.2"/><path d="M65.2 2.6 L68.4 5.9 L65.2 9.2"/><path d="M162 2.6 L165.2 5.9 L162 9.2"/></g></svg>
<svg class="r" style="left:838px;top:192px;" width="34" height="16" viewBox="0 0 34 16"><path d="M3.4 5.6 L7.6 9.8 L11.8 5.6" fill="none" stroke="#666" stroke-width="1.7"/><path d="M28.8 8.2 A4.3 4.3 0 1 1 26.5 4.4" fill="none" stroke="#666" stroke-width="1.6"/><path d="M24.400 1.400 L27.400 4.300 L24 5.900" fill="none" stroke="#666" stroke-width="1.400"/></svg>
<div class="r" style="left:883px;top:189px;width:202px;height:22px;background:#fff;border:1px solid #d9d9d9;box-sizing:border-box"></div>
<div class="t" style="left:892.00px;top:191.70px;font-size:12px;line-height:16px;color:#6d6d6d;letter-spacing:-0.333px;">Search Local Disk (C:)</div>
<svg class="r" style="left:1062px;top:193px;" width="16" height="14" viewBox="0 0 16 14"><circle cx="9.4" cy="5.4" r="3.5" fill="none" stroke="#5a5a5a" stroke-width="1.6"/><path d="M6.8 8 L2.6 12.2" stroke="#5a5a5a" stroke-width="1.9"/></svg>
<div class="r" style="left:313px;top:578px;width:140px;height:24px;background:#d9d9d9;"></div>
<div class="t" style="left:374.50px;top:221.60px;font-size:12px;line-height:16px;color:#000;letter-spacing:-0.092px;">MicrosoftEdge</div>
<svg class="r" style="left:355px;top:221.6px;" width="14" height="16" viewBox="0 0 14 16"><rect x="1" y=".5" width="12.6" height="15.2" rx=".5" fill="#fdf2cc" stroke="#f6e7b4" stroke-width=".6"/><path d="M11.4 9 L13.6 7.4 V15.7 H11.4Z" fill="#f9e8b0"/></svg>
<div class="t" style="left:374.50px;top:245.60px;font-size:12px;line-height:16px;color:#000;letter-spacing:-0.007px;">Music</div>
<svg class="r" style="left:353px;top:245.6px;" width="18" height="16" viewBox="0 0 18 16"><path d="M7.4 .6 C8.2 2.6 10 3.6 12 5 C14.6 6.8 14.6 10 12.6 12.4 C13.4 9.8 12 7.6 9.2 6.6 V12.4 C9.2 14.6 7 15.8 5 15.4 C2.8 15 2 13.2 3 11.8 C4 10.400 6 10.200 7.400 10.800Z" fill="#1f8fe8"/></svg>
<div class="t" style="left:374.50px;top:269.60px;font-size:12px;line-height:16px;color:#000;letter-spacing:-0.335px;">OneDrive</div>
<svg class="r" style="left:353px;top:269.6px;" width="18" height="16" viewBox="0 0 18 16"><path d="M4.2 13 C1.8 13 .6 11.4 .8 9.8 C1 8.2 2.4 7.4 3.6 7.6 C3.8 5.2 5.8 3.6 8 4 C9.4 4.2 10.4 5 11 6.2 C12.8 5.6 14.6 6.8 14.8 8.6 C16.4 8.8 17.4 10 17.2 11.2 C17 12.4 16 13 14.8 13Z" fill="#0f62c2"/><path d="M6.2 13 C4.6 13 3.8 11.8 4 10.8 C4.2 9.6 5.4 9 6.4 9.2 C7 7.6 8.6 6.8 10.2 7.2 C11.4 7.5 12.2 8.4 12.4 9.4 C13.6 9.2 14.8 10 14.8 11.2 C14.8 12.2 14 13 13 13Z" fill="#2585e0"/></svg>
<div class="t" style="left:374.50px;top:293.60px;font-size:12px;line-height:16px;color:#000;letter-spacing:-0.293px;">Pictures</div>
<svg class="r" style="left:353px;top:293.6px;" width="18" height="16" viewBox="0 0 18 16"><rect x="1" y="2.6" width="16" height="11.4" fill="#fff" stroke="#8d9499" stroke-width=".9"/><defs><linearGradient id="npg23" x1="0" y1="0" x2="0" y2="1"><stop offset="0" stop-color="#86ade0"/><stop offset=".5" stop-color="#cfe0f0"/><stop offset=".75" stop-color="#9db6c8"/><stop offset="1" stop-color="#e3ebf1"/></linearGradient></defs><rect x="2.6" y="4.2" width="12.8" height="8.2" fill="url(#npg23)"/><path d="M2.6 7.800 C4.500 7 6.500 8 8.500 9.200 C11 10.600 13.400 10.600 15.400 10.800 V11.400 C11 11.600 6 11.800 2.600 12Z" fill="#46594f"/></svg>
<div class="t" style="left:374.50px;top:317.60px;font-size:12px;line-height:16px;color:#000;letter-spacing:-0.612px;">Saved Games</div>
<svg class="r" style="left:353px;top:317.6px;" width="18" height="16" viewBox="0 0 18 16"><path d="M9.4 1.4 C9 3.4 9.4 4.6 10.6 5.2 C13.6 5 16 7.4 15.6 10.4 C15.2 13.4 12.2 15 9.6 14.2 C8.2 13.8 7.4 12.8 7.2 12 C6.2 12.6 4.6 12.6 3.4 11.8 C1.6 10.8 1 8.8 1.8 7.2 C2.8 5.4 4.8 5 6.4 5.8 C6.8 4 7.8 2.2 9.4 1.4Z" fill="#5d6670"/><path d="M2 8 L6 8 M4 6 L4 10" stroke="#3c8ddb" stroke-width="1.8"/></svg>
<div class="t" style="left:374.50px;top:341.60px;font-size:12px;line-height:16px;color:#000;letter-spacing:-0.712px;">Searches</div>
<svg class="r" style="left:353px;top:341.6px;" width="18" height="16" viewBox="0 0 18 16"><circle cx="10.6" cy="6.2" r="4.6" fill="#d5e8f8" stroke="#7f9cb8" stroke-width="1.3"/><path d="M7.2 9.6 L2 14.8" stroke="#6f7c8a" stroke-width="2"/></svg>
<div class="t" style="left:374.50px;top:365.60px;font-size:12px;line-height:16px;color:#000;letter-spacing:-0.412px;">Videos</div>
<svg class="r" style="left:353px;top:365.6px;" width="18" height="16" viewBox="0 0 18 16"><rect x="2.4" y=".6" width="13" height="15" fill="#3a3d42"/><rect x="4.8" y="1.8" width="8.2" height="5.8" fill="#e8b63a"/><rect x="4.8" y="8.6" width="8.2" height="5.8" fill="#4c7fd0"/><path d="M4.8 6 L8 3.6 L13 6.4 V7.6 H4.8Z" fill="#4d7a3a"/><g fill="#e9e9e9"><rect x="2.9" y="1.6" width="1.2" height="1.6"/><rect x="2.9" y="4.6" width="1.2" height="1.6"/><rect x="2.9" y="7.6" width="1.2" height="1.6"/><rect x="2.9" y="10.6" width="1.2" height="1.6"/><rect x="2.9" y="13.4" width="1.2" height="1.6"/><rect x="13.7" y="1.6" width="1.2" height="1.6"/><rect x="13.7" y="4.6" width="1.2" height="1.6"/><rect x="13.7" y="7.6" width="1.2" height="1.6"/><rect x="13.7" y="10.6" width="1.2" height="1.6"/><rect x="13.7" y="13.4" width="1.2" height="1.6"/></g></svg>
<div class="t" style="left:366.00px;top:389.60px;font-size:12px;line-height:16px;color:#000;letter-spacing:-0.582px;">This PC</div>
<svg class="r" style="left:344px;top:389.6px;" width="18" height="16" viewBox="0 0 18 16"><rect x="1" y="1.6" width="16" height="10.4" fill="#35a3ea" stroke="#2a7fc0" stroke-width=".9"/><rect x="2.2" y="2.8" width="13.6" height="8" fill="#49b5f3"/><rect x="6.4" y="12.4" width="5.2" height="1.4" fill="#8b96a2"/><rect x="3.4" y="13.8" width="11.2" height="1.2" fill="#6d7a88"/></svg>
<div class="t" style="left:374.50px;top:413.60px;font-size:12px;line-height:16px;color:#000;letter-spacing:-0.336px;">3D Objects</div>
<svg class="r" style="left:353px;top:413.6px;" width="18" height="16" viewBox="0 0 18 16"><path d="M9 1 L16.6 4 V12 L9 15.4 L1.4 12 V4Z" fill="#5cc7e4"/><path d="M9 7.2 L16.6 4 V12 L9 15.4Z" fill="#2697c4"/><path d="M9 7.2 L1.4 4 V12 L9 15.4Z" fill="#8fe0f1"/><path d="M9 1 L16.6 4 L9 7.2 L1.4 4Z" fill="#c9f1f9"/></svg>
<div class="t" style="left:374.50px;top:437.60px;font-size:12px;line-height:16px;color:#000;letter-spacing:-0.289px;">Desktop</div>
<svg class="r" style="left:353px;top:437.6px;" width="18" height="16" viewBox="0 0 18 16"><rect x="1" y="2.4" width="16" height="11.4" fill="#1a7fe0" stroke="#156bbf" stroke-width=".8"/><rect x="1" y="12.2" width="16" height="1.8" fill="#0f4f95"/><rect x="2.4" y="12.6" width="1.6" height="1" fill="#cfe3f6"/></svg>
<div class="t" style="left:374.50px;top:461.60px;font-size:12px;line-height:16px;color:#000;letter-spacing:-0.077px;">Documents</div>
<svg class="r" style="left:353px;top:461.6px;" width="18" height="16" viewBox="0 0 18 16"><path d="M3.4 .8 H11.2 L14.6 4.2 V15.4 H3.4Z" fill="#fff" stroke="#8d9298" stroke-width=".9"/><g stroke="#4f86c9" stroke-width="1"><path d="M5.6 5 H9.4 M5.6 7.4 H12.4 M5.6 9.8 H12.4 M5.6 12.2 H12.4"/></g><path d="M11.2 .8 V4.2 H14.6" fill="#e9ecef" stroke="#8d9298" stroke-width=".7"/></svg>
<div class="t" style="left:374.50px;top:485.60px;font-size:12px;line-height:16px;color:#000;letter-spacing:-0.107px;">Downloads</div>
<svg class="r" style="left:353px;top:485.6px;" width="18" height="16" viewBox="0 0 18 16"><path d="M6 .8 H11.400 V7.400 H16.600 L8.700 15.400 L.8 7.400 H6Z" fill="#2b8be3"/></svg>
<div class="t" style="left:374.50px;top:509.60px;font-size:12px;line-height:16px;color:#000;letter-spacing:-0.007px;">Music</div>
<svg class="r" style="left:353px;top:509.6px;" width="18" height="16" viewBox="0 0 18 16"><path d="M7.4 .6 C8.2 2.6 10 3.6 12 5 C14.6 6.8 14.6 10 12.6 12.4 C13.4 9.8 12 7.6 9.2 6.6 V12.4 C9.2 14.6 7 15.8 5 15.4 C2.8 15 2 13.2 3 11.8 C4 10.400 6 10.200 7.400 10.800Z" fill="#1f8fe8"/></svg>
<div class="t" style="left:374.50px;top:533.60px;font-size:12px;line-height:16px;color:#000;letter-spacing:-0.293px;">Pictures</div>
<svg class="r" style="left:353px;top:533.6px;" width="18" height="16" viewBox="0 0 18 16"><rect x="1" y="2.6" width="16" height="11.4" fill="#fff" stroke="#8d9499" stroke-width=".9"/><defs><linearGradient id="npg33" x1="0" y1="0" x2="0" y2="1"><stop offset="0" stop-color="#86ade0"/><stop offset=".5" stop-color="#cfe0f0"/><stop offset=".75" stop-color="#9db6c8"/><stop offset="1" stop-color="#e3ebf1"/></linearGradient></defs><rect x="2.6" y="4.2" width="12.8" height="8.2" fill="url(#npg33)"/><path d="M2.6 7.800 C4.500 7 6.500 8 8.500 9.200 C11 10.600 13.400 10.600 15.400 10.800 V11.400 C11 11.600 6 11.800 2.600 12Z" fill="#46594f"/></svg>
<div class="t" style="left:374.50px;top:557.60px;font-size:12px;line-height:16px;color:#000;letter-spacing:-0.412px;">Videos</div>
<svg class="r" style="left:353px;top:557.6px;" width="18" height="16" viewBox="0 0 18 16"><rect x="2.4" y=".6" width="13" height="15" fill="#3a3d42"/><rect x="4.8" y="1.8" width="8.2" height="5.8" fill="#e8b63a"/><rect x="4.8" y="8.6" width="8.2" height="5.8" fill="#4c7fd0"/><path d="M4.8 6 L8 3.6 L13 6.4 V7.6 H4.8Z" fill="#4d7a3a"/><g fill="#e9e9e9"><rect x="2.9" y="1.6" width="1.2" height="1.6"/><rect x="2.9" y="4.6" width="1.2" height="1.6"/><rect x="2.9" y="7.6" width="1.2" height="1.6"/><rect x="2.9" y="10.6" width="1.2" height="1.6"/><rect x="2.9" y="13.4" width="1.2" height="1.6"/><rect x="13.7" y="1.6" width="1.2" height="1.6"/><rect x="13.7" y="4.6" width="1.2" height="1.6"/><rect x="13.7" y="7.6" width="1.2" height="1.6"/><rect x="13.7" y="10.6" width="1.2" height="1.6"/><rect x="13.7" y="13.4" width="1.2" height="1.6"/></g></svg>
<div class="t" style="left:374.50px;top:581.60px;font-size:12px;line-height:16px;color:#000;letter-spacing:-0.319px;">Local Disk (C:)</div>
<svg class="r" style="left:354px;top:583.6px;" width="16" height="13" viewBox="0 0 16 13"><g fill="#1fb3c9"><rect x="0.2" y="0.3" width="3" height="2.8"/><rect x="3.9" y="0.3" width="3" height="2.8"/><rect x="0.2" y="3.8" width="3" height="2.8"/><rect x="3.9" y="3.8" width="3" height="2.8"/></g><path d="M7.4 5.2 H13.4 L15.6 8 H2.4 L4 6.6 H7.4Z" fill="#b9bcc0"/><rect x="2.2" y="8" width="13.6" height="4.4" rx=".6" fill="#33363a"/><rect x="10" y="9.6" width="4" height="1.2" fill="#d8dadc"/></svg>
<div class="r" style="left:453px;top:218px;width:15px;height:387px;background:#f0f0f0;"></div>
<div class="r" style="left:453px;top:366px;width:15px;height:120px;background:#cdcdcd;"></div>
<svg class="r" style="left:453px;top:218px;" width="15" height="17" viewBox="0 0 15 17"><path d="M4 9.8 L7.5 6.2 L11 9.8" fill="none" stroke="#505050" stroke-width="1.6"/></svg>
<svg class="r" style="left:453px;top:588px;" width="15" height="17" viewBox="0 0 15 17"><path d="M4 6.6 L7.5 10.2 L11 6.6" fill="none" stroke="#505050" stroke-width="1.6"/></svg>
<div class="r" style="left:473px;top:218px;width:272px;height:25px;background:#d9ebf9;"></div>
<div class="r" style="left:729px;top:218px;width:1px;height:25px;background:#c2dcf0;"></div>
<div class="r" style="left:864px;top:218px;width:1px;height:25px;background:#e5e5e5;"></div>
<div class="r" style="left:984px;top:218px;width:1px;height:25px;background:#e5e5e5;"></div>
<div class="r" style="left:1064px;top:218px;width:1px;height:25px;background:#e5e5e5;"></div>
<div class="t" style="left:490.00px;top:223.00px;font-size:12px;line-height:16px;color:#4c607a;letter-spacing:-0.127px;">Name</div>
<div class="t" style="left:751.00px;top:223.00px;font-size:12px;line-height:16px;color:#4c607a;letter-spacing:0.043px;">Date modified</div>
<div class="t" style="left:871.00px;top:223.00px;font-size:12px;line-height:16px;color:#4c607a;letter-spacing:-0.654px;">Type</div>
<div class="t" style="left:991.00px;top:223.00px;font-size:12px;line-height:16px;color:#4c607a;letter-spacing:-1.086px;">Size</div>
<svg class="r" style="left:608px;top:217px;" width="14" height="8" viewBox="0 0 14 8"><path d="M2.6 5.6 L7 1.6 L11.4 5.6" fill="none" stroke="#6a6a6a" stroke-width="1"/></svg>
<svg class="r" style="left:730px;top:225px;" width="14" height="10" viewBox="0 0 14 10"><path d="M3 2.8 L6.8 6.6 L10.6 2.8" fill="none" stroke="#4a5a70" stroke-width="1.1"/></svg>
<svg class="r" style="left:492px;top:250.90000000000003px;" width="14" height="16" viewBox="0 0 14 16"><rect x="1" y=".5" width="12.6" height="15.2" rx=".5" fill="#fdf2cc" stroke="#f6e7b4" stroke-width=".6"/><path d="M11.4 9 L13.6 7.4 V15.7 H11.4Z" fill="#f9e8b0"/></svg>
<div class="t" style="left:511.00px;top:251.60px;font-size:12px;line-height:16px;color:#000;letter-spacing:-0.306px;">$WinREAgent</div>
<div class="t" style="left:751.50px;top:251.60px;font-size:12px;line-height:16px;color:#6d6d6d;letter-spacing:-0.296px;">2/6/2024 4:03 PM</div>
<div class="t" style="left:871.00px;top:251.60px;font-size:12px;line-height:16px;color:#6d6d6d;letter-spacing:-0.062px;">File folder</div>
<svg class="r" style="left:492px;top:271.90000000000003px;" width="14" height="16" viewBox="0 0 14 16"><rect x="1" y=".5" width="12.6" height="15.2" rx=".5" fill="#fbde74" stroke="#f0cf5c" stroke-width=".6"/><rect x="1" y=".5" width="1.6" height="15.2" fill="#f5d465"/><path d="M11.2 9.4 L13.6 7.4 V15.7 H11.2Z" fill="#efc94e"/></svg>
<div class="t" style="left:511.00px;top:272.60px;font-size:12px;line-height:16px;color:#000;letter-spacing:-0.379px;">PerfLogs</div>
<div class="t" style="left:751.50px;top:272.60px;font-size:12px;line-height:16px;color:#6d6d6d;letter-spacing:-0.220px;">12/7/2019 9:14 AM</div>
<div class="t" style="left:871.00px;top:272.60px;font-size:12px;line-height:16px;color:#6d6d6d;letter-spacing:-0.062px;">File folder</div>
<svg class="r" style="left:492px;top:292.90000000000003px;" width="14" height="16" viewBox="0 0 14 16"><rect x="1" y=".5" width="12.6" height="15.2" rx=".5" fill="#fbde74" stroke="#f0cf5c" stroke-width=".6"/><rect x="1" y=".5" width="1.6" height="15.2" fill="#f5d465"/><path d="M11.2 9.4 L13.6 7.4 V15.7 H11.2Z" fill="#efc94e"/></svg>
<div class="t" style="left:511.00px;top:293.60px;font-size:12px;line-height:16px;color:#000;letter-spacing:-0.245px;">Program Files</div>
<div class="t" style="left:751.50px;top:293.60px;font-size:12px;line-height:16px;color:#6d6d6d;letter-spacing:-0.296px;">2/6/2024 2:53 PM</div>
<div class="t" style="left:871.00px;top:293.60px;font-size:12px;line-height:16px;color:#6d6d6d;letter-spacing:-0.062px;">File folder</div>
<svg class="r" style="left:492px;top:313.90000000000003px;" width="14" height="16" viewBox="0 0 14 16"><rect x="1" y=".5" width="12.6" height="15.2" rx=".5" fill="#fbde74" stroke="#f0cf5c" stroke-width=".6"/><rect x="1" y=".5" width="1.6" height="15.2" fill="#f5d465"/><path d="M11.2 9.4 L13.6 7.4 V15.7 H11.2Z" fill="#efc94e"/></svg>
<div class="t" style="left:511.00px;top:314.60px;font-size:12px;line-height:16px;color:#000;letter-spacing:-0.256px;">Program Files (x86)</div>
<div class="t" style="left:751.50px;top:314.60px;font-size:12px;line-height:16px;color:#6d6d6d;letter-spacing:-0.246px;">7/18/2024 10:46 AM</div>
<div class="t" style="left:871.00px;top:314.60px;font-size:12px;line-height:16px;color:#6d6d6d;letter-spacing:-0.062px;">File folder</div>
<svg class="r" style="left:492px;top:334.90000000000003px;" width="14" height="16" viewBox="0 0 14 16"><rect x="1" y=".5" width="12.6" height="15.2" rx=".5" fill="#fdf2cc" stroke="#f6e7b4" stroke-width=".6"/><path d="M11.4 9 L13.6 7.4 V15.7 H11.4Z" fill="#f9e8b0"/></svg>
<div class="t" style="left:511.00px;top:335.60px;font-size:12px;line-height:16px;color:#000;letter-spacing:-0.215px;">ProgramData</div>
<div class="t" style="left:751.50px;top:335.60px;font-size:12px;line-height:16px;color:#6d6d6d;letter-spacing:-0.296px;">2/6/2024 3:27 PM</div>
<div class="t" style="left:871.00px;top:335.60px;font-size:12px;line-height:16px;color:#6d6d6d;letter-spacing:-0.062px;">File folder</div>
<svg class="r" style="left:492px;top:355.90000000000003px;" width="14" height="16" viewBox="0 0 14 16"><rect x="1" y=".5" width="12.6" height="15.2" rx=".5" fill="#fbde74" stroke="#f0cf5c" stroke-width=".6"/><rect x="1" y=".5" width="1.6" height="15.2" fill="#f5d465"/><path d="M11.2 9.4 L13.6 7.4 V15.7 H11.2Z" fill="#efc94e"/></svg>
<div class="t" style="left:511.00px;top:356.60px;font-size:12px;line-height:16px;color:#000;letter-spacing:-0.867px;">Users</div>
<div class="t" style="left:751.50px;top:356.60px;font-size:12px;line-height:16px;color:#6d6d6d;letter-spacing:-0.196px;">8/24/2022 11:04 AM</div>
<div class="t" style="left:871.00px;top:356.60px;font-size:12px;line-height:16px;color:#6d6d6d;letter-spacing:-0.062px;">File folder</div>
<svg class="r" style="left:492px;top:376.90000000000003px;" width="14" height="16" viewBox="0 0 14 16"><rect x="1" y=".5" width="12.6" height="15.2" rx=".5" fill="#fbde74" stroke="#f0cf5c" stroke-width=".6"/><rect x="1" y=".5" width="1.6" height="15.2" fill="#f5d465"/><path d="M11.2 9.4 L13.6 7.4 V15.7 H11.2Z" fill="#efc94e"/></svg>
<div class="t" style="left:511.00px;top:377.60px;font-size:12px;line-height:16px;color:#000;letter-spacing:-0.040px;">Windows</div>
<div class="t" style="left:751.50px;top:377.60px;font-size:12px;line-height:16px;color:#6d6d6d;letter-spacing:-0.296px;">2/6/2024 2:44 PM</div>
<div class="t" style="left:871.00px;top:377.60px;font-size:12px;line-height:16px;color:#6d6d6d;letter-spacing:-0.062px;">File folder</div>
<div class="t" style="left:327.50px;top:608.00px;font-size:12px;line-height:16px;color:#1e1e1e;letter-spacing:-0.211px;">7 items</div>
<div class="r" style="left:1049px;top:605px;width:22px;height:22px;background:#cce8ff;border:1px solid #3c8dc9;box-sizing:border-box"></div>
<svg class="r" style="left:1049px;top:605px;" width="44" height="22" viewBox="0 0 44 22"><g fill="#fff" stroke="#b5542f" stroke-width=".6"><rect x="5.6" y="5.4" width="2.8" height="2.8"/><rect x="5.6" y="9.600" width="2.800" height="2.800"/><rect x="5.600" y="13.800" width="2.800" height="2.800"/></g><g stroke="#2f3e55" stroke-width=".9"><path d="M10.800 6.800 H14.400 M16.400 6.800 H19.400 M10.800 11 H14.400 M16.400 11 H19.400 M10.800 15.200 H14.400 M16.400 15.200 H19.400"/></g><rect x="26.400" y="5.400" width="13" height="10" fill="#fff" stroke="#a79b90" stroke-width=".8"/><rect x="27.800" y="6.800" width="10.200" height="7.200" fill="#86aedd"/><path d="M27.800 10 C30 9 32 10 34 11.400 C35.500 12.400 37 12.600 38 12.600 V14 H27.800Z" fill="#33453a"/></svg>
<svg class="r" style="left:1036px;top:606px;" width="200" height="64" viewBox="0 0 200 64"><g fill="none" stroke="rgba(255,255,255,.44)" stroke-width="3.6" stroke-linejoin="miter"><path d="M5.2 53 L13.2 16.4 L21.2 53 M8 44 H18.4"/><path d="M29 53 V16.4 L42.1 53 V16.4"/><path d="M50 16.4 L57.2 35.5 L64.4 16.4 M57.2 35.5 V53"/><path d="M86 48 V6.500 L125.400 28.600 Q128.500 31.600 125.400 34.600 L87 60.400" stroke-width="3.4" stroke-linejoin="round"/><path d="M80 11.600 Q76.300 11.800 76.300 15.500 V56.500 L115 37.700" stroke-width="3.4" stroke-linejoin="round"/><path d="M89.500 18.300 L121 34.600" stroke-width="3.4"/><path d="M136.700 53 V16.400 H144 Q150.400 16.400 150.400 25.400 Q150.400 34.400 144 34.400 H136.700 M144.500 34.400 L150.600 53"/><path d="M158.100 16.400 V45 Q158.100 52.600 164.450 52.600 Q170.800 52.600 170.800 45 V16.400"/><path d="M178.700 53 V16.400 L192.600 53 V16.400"/></g></svg>
<div class="t" style="left:1219.00px;top:629.50px;font-size:12px;line-height:16px;color:#fff;letter-spacing:0.071px;-webkit-text-stroke:0;">Test Mode</div>
<div class="t" style="left:1190.00px;top:645.50px;font-size:12px;line-height:16px;color:#fff;letter-spacing:-0.169px;-webkit-text-stroke:0;">Windows 10 Pro</div>
<div class="t" style="left:1090.00px;top:663.00px;font-size:12px;line-height:16px;color:#fff;letter-spacing:-0.397px;-webkit-text-stroke:0;">Build 19041.vb_release.191206-1406</div>
<div class="r" style="left:0px;top:680px;width:1280px;height:40px;background:linear-gradient(90deg,#051c2b 0%,#081a29 40%,#0b1626 70%,#0c1424 100%);"></div>
<svg class="r" style="left:16px;top:692px;" width="16" height="16" viewBox="0 0 16 16"><g fill="#fff"><path d="M0 2.3 L6.9 1.3 V7.5 H0Z"/><path d="M7.8 1.2 L16 0 V7.5 H7.8Z"/><path d="M0 8.4 H6.9 V14.6 L0 13.6Z"/><path d="M7.8 8.4 H16 V16 L7.8 14.8Z"/></g></svg>
<div class="r" style="left:48px;top:680px;width:288px;height:40px;background:#f3f3f3;box-shadow:0 0 0 1px #d0d0d0 inset"></div>
<svg class="r" style="left:58px;top:690px;" width="20" height="20" viewBox="0 0 20 20"><circle cx="12.4" cy="7.8" r="5.2" fill="none" stroke="#222" stroke-width="1.4"/><path d="M8.6 11.8 L2.4 18" stroke="#222" stroke-width="1.5"/></svg>
<div class="t" style="left:88.40px;top:691.10px;font-size:15px;line-height:19px;color:#2b2b2b;letter-spacing:-0.315px;">Type here to search</div>
<svg class="r" style="left:256px;top:681px;" width="80" height="38" viewBox="0 0 80 38"><defs><radialGradient id="sg" cx=".58" cy=".35" r=".62"><stop offset="0" stop-color="#6f6fe6"/><stop offset=".45" stop-color="#8d8bee"/><stop offset=".8" stop-color="#d9d6fa"/><stop offset="1" stop-color="#f3f3f3" stop-opacity="0"/></radialGradient><linearGradient id="tg" x1="0" y1="0" x2="0" y2="1"><stop offset="0" stop-color="#1536b8"/><stop offset="1" stop-color="#0a1560"/></linearGradient></defs><rect x="0" y="0" width="80" height="38" fill="url(#sg)"/><g fill="none" stroke="#fff" stroke-linecap="round"><path d="M45 0 L41 8 L38.5 14 L41 19 L39.5 25 L37 29" stroke-width="1.8"/><path d="M41 8 L34 6 M38.5 14 L31.5 12 M41 19 L46 22 M40 12 L46 13" stroke-width="1.1"/><path d="M57.500 0 L59 6 L62.500 10 L62 15" stroke-width="1.5"/><path d="M59 6 L55 9 M62.500 10 L66 12" stroke-width="1"/></g><path d="M0 38 C10 34 30 32 45 32 C60 32 72 34 80 36.500 V38Z" fill="#0b1a6e"/><g fill="url(#tg)"><ellipse cx="10" cy="24" rx="7.500" ry="7"/><ellipse cx="19.500" cy="26.500" rx="6.500" ry="5.500"/><rect x="9.200" y="29" width="1.600" height="6"/><rect x="19" y="30" width="1.400" height="5"/><ellipse cx="58" cy="27.500" rx="6.500" ry="6"/><ellipse cx="69" cy="26" rx="8.500" ry="8"/><rect x="68.200" y="32" width="1.800" height="6"/><rect x="57.400" y="32" width="1.400" height="5"/></g></svg>
<svg class="r" style="left:351px;top:691px;" width="18" height="17" viewBox="0 0 18 17"><g fill="none" stroke="#fff" stroke-width="1.2"><path d="M1.4 1 V3.4 H11.7 V1"/><rect x="1.4" y="5.4" width="10.3" height="6.4"/><path d="M1.4 16 V13.6 H11.7 V16"/><path d="M15.6 1 V3.6 M15.6 9.2 V16"/></g><rect x="14.2" y="5" width="2.8" height="2.7" fill="#fff"/></svg>
<svg class="r" style="left:399px;top:688px;" width="24" height="24" viewBox="0 0 48 48"><defs><linearGradient id="eg135" x1="0" y1="0" x2="1" y2=".6"><stop offset="0" stop-color="#30bdf2"/><stop offset=".5" stop-color="#2bb9cf"/><stop offset="1" stop-color="#63d24c"/></linearGradient><linearGradient id="eg235" x1="0" y1="0" x2=".8" y2="1"><stop offset="0" stop-color="#1d8fdc"/><stop offset=".55" stop-color="#1670c4"/><stop offset="1" stop-color="#0c4b98"/></linearGradient><radialGradient id="eg335" cx=".8" cy=".5" r=".55"><stop offset="0" stop-color="#86e22c"/><stop offset=".6" stop-color="#6fd845" stop-opacity=".8"/><stop offset="1" stop-color="#6fd845" stop-opacity="0"/></radialGradient><linearGradient id="eg435" x1="0" y1="0" x2="1" y2="1"><stop offset="0" stop-color="#1668ba"/><stop offset="1" stop-color="#0f4790"/></linearGradient></defs><path d="M1.5 24 C1.5 10 12 1 25 1 C38 1 47.5 10 47.5 21 C47.5 28 42.5 32.5 36 32.5 C30 32.5 28.5 30 28.5 28.5 C28.5 27 30.2 26.6 30.2 24 C30.2 20.5 26.5 16.5 20.5 16.5 C11 16.500 3.500 23 1.500 24Z" fill="url(#eg135)"/><path d="M25 1 C38 1 47.5 10 47.5 21 C47.5 28 42.5 32.5 36 32.5 C31 32.5 29 31 28.6 29 L30 12Z" fill="url(#eg335)"/><path d="M1.5 24 C1.5 37 11 47 24 47 C30 47 35 45.5 39 42.5 C30 44 20 39 20 29 C20 23 23 19.500 26.500 18.500 C22 13 9 13.500 1.500 24Z" fill="url(#eg235)"/><path d="M19.500 21 C15.500 25 15.500 33 19 38.500 C23 44.500 31 46.500 38 43 C42 41 44.500 38 45.500 35.500 C46 34.400 45 34 44.200 34.600 C40 37.600 33 38 28.500 34 C25 31 25 27 27 25 C25.500 22 22.500 19.500 19.500 21Z" fill="url(#eg435)"/></svg>
<div class="r" style="left:436px;top:680px;width:48px;height:40px;background:#394851;"></div>
<div class="r" style="left:436px;top:718px;width:48px;height:2px;background:#8cbbe9;"></div>
<svg class="r" style="left:448px;top:690px;" width="24" height="20" viewBox="0 0 24 20"><path d="M1 2.200 Q1 1 2.200 1 H8.600 L10.600 3 H21.800 Q23 3 23 4.200 V18 H1Z" fill="#f2b632"/><rect x="1" y="5" width="22" height="13.400" fill="#fbd665"/><path d="M5.600 18.400 V11.400 Q5.600 10.400 6.600 10.400 H17.400 Q18.400 10.400 18.400 11.400 V18.400Z" fill="#3f8fd6"/><rect x="9.400" y="14.600" width="5.200" height="3.800" fill="#fbd665"/></svg>
<svg class="r" style="left:497px;top:688px;" width="24" height="24" viewBox="0 0 48 48"><defs><radialGradient id="ffg36" cx=".72" cy=".12" r="1"><stop offset="0" stop-color="#fff44f"/><stop offset=".28" stop-color="#ffbd2e"/><stop offset=".52" stop-color="#ff7a2a"/><stop offset=".72" stop-color="#ff3d4a"/><stop offset=".9" stop-color="#f0207a"/><stop offset="1" stop-color="#d81b90"/></radialGradient><radialGradient id="ffp36" cx=".45" cy=".45" r=".6"><stop offset="0" stop-color="#8a4ff0"/><stop offset="1" stop-color="#5b2bbd"/></radialGradient></defs><path d="M30 1.5 C33.5 5 36 9 37.5 12 C40 12.5 42.5 15.5 44 19 C46.5 25 46 33 41.5 38.5 C37 44.5 29.5 47 22.5 46 C12 44.5 3.5 36 2.5 26 C2 20 3.5 15 6 11.5 C6.5 13 7.5 14.5 8.5 15.5 C9 12.5 10.5 10 12 8.5 C13 10.5 14.5 12 16.5 13 C20 11.5 24.5 12 27 13.5 C26 9 27.5 4 30 1.5Z" fill="url(#ffg36)"/><circle cx="24.5" cy="27" r="9.8" fill="url(#ffp36)"/><path d="M14 19 C17 15.5 23 14 28 16 C31 17.2 33 19.5 33.5 21.5 C31 19 27 18.6 24 20 C21 21.4 21.5 24 24 24.5 C20 26 15 24 14 19Z" fill="#ff8a2a"/><path d="M33.5 21.5 C36.5 26 35.5 33 30.5 36.5 C25 40 17.5 38.5 14.5 34 C19 37 26 36.5 29.5 32.5 C32.5 29 32.5 24.5 33.5 21.5Z" fill="#ff4b3d" opacity=".85"/></svg>
<svg class="r" style="left:1072px;top:694px;" width="14" height="12" viewBox="0 0 14 12"><path d="M1.400 9 L7 3.400 L12.600 9" fill="none" stroke="#fff" stroke-width="1.400"/></svg>
<svg class="r" style="left:1097px;top:691px;" width="13" height="17" viewBox="0 0 13 17"><g fill="none" stroke="#fff" stroke-width="1.200"><rect x="1" y="5.200" width="7.400" height="6.600" rx="1.400"/><path d="M8.400 7.600 L11.600 5.800 V11.200 L8.400 9.400"/><path d="M2.600 2.600 Q6 -.2 9.800 2.600 M2.600 14.400 Q6 17.200 9.800 14.400"/></g></svg>
<svg class="r" style="left:1119px;top:693px;" width="17" height="15" viewBox="0 0 17 15"><g fill="none" stroke="#fff" stroke-width="1.200"><rect x="4.200" y="1.200" width="11.600" height="7.800"/><path d="M10 9 V12.600 M5.600 12.800 H14"/><rect x=".8" y="1.600" width="4.400" height="4" fill="#0c1826"/><path d="M3 5.600 V9.600 H6"/></g></svg>
<svg class="r" style="left:1143px;top:692px;" width="18" height="16" viewBox="0 0 18 16"><g fill="none" stroke="#fff" stroke-width="1.200"><path d="M1 5.600 H3.800 L7.400 2.200 V13.400 L3.800 10 H1Z"/><path d="M9.600 5.600 Q11 7.800 9.600 10 M11.800 3.800 Q14.200 7.800 11.800 11.800 M14 2 Q17.400 7.800 14 13.600"/></g></svg>
<div class="t" style="left:1171.75px;top:683.00px;font-size:12px;line-height:16px;color:#fff;letter-spacing:-0.508px;">12:44 PM</div>
<div class="t" style="left:1168.60px;top:701.00px;font-size:12px;line-height:16px;color:#fff;letter-spacing:-0.109px;">8/17/2024</div>
<svg class="r" style="left:1238px;top:692px;" width="18" height="17" viewBox="0 0 18 17"><path d="M1.200 1.200 H16.400 V11.800 H11.200 L8.800 14.800 L6.400 11.800 H1.200Z" fill="none" stroke="#fff" stroke-width="1.300"/></svg>
<div class="r" style="left:1274px;top:680px;width:1px;height:40px;background:#4a5564;"></div>
</div></body></html>
